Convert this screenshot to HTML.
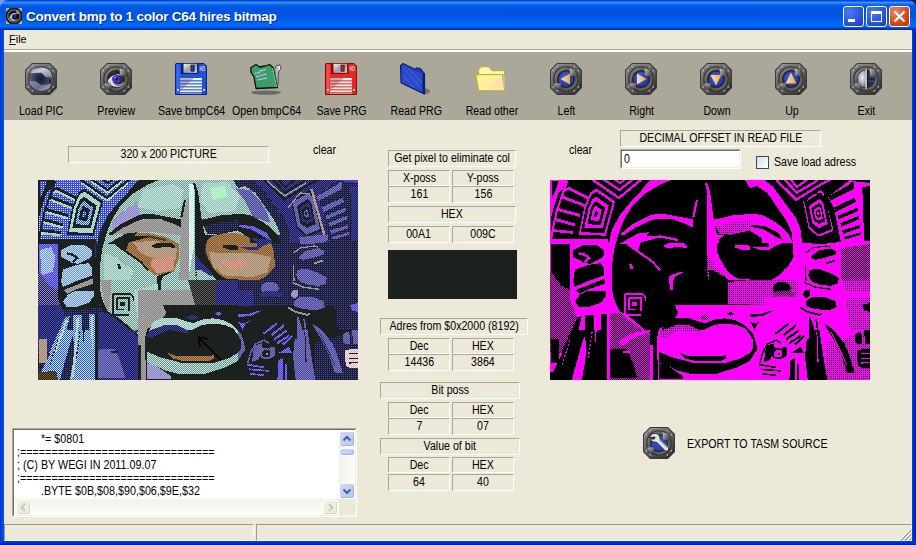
<!DOCTYPE html>
<html>
<head>
<meta charset="utf-8">
<title>Convert bmp to 1 color C64 hires bitmap</title>
<style>
html,body{margin:0;padding:0;}
body{width:916px;height:545px;overflow:hidden;background:#ECE9D8;font-family:"Liberation Sans",sans-serif;font-size:11px;color:#000;position:relative;}
.abs{position:absolute;}
#titlebar{left:0;top:0;width:916px;height:30px;background:linear-gradient(to bottom,#0037D0 0px,#0550E8 1px,#3D95FF 2.5px,#1070F8 4px,#0058E8 6px,#0054E0 9px,#0056E4 17px,#0062F4 22px,#0068FF 26px,#0058E8 27.5px,#0030C0 29px,#0028B0 30px);border-radius:8px 8px 0 0;}
#corner-l{top:0;width:8px;height:8px;background:#7A9CEA;}#corner-r{top:0;width:8px;height:8px;background:#0C1A4A;}
#title{left:26px;top:9px;font-weight:bold;font-size:13.5px;line-height:16px;color:#fff;white-space:nowrap;text-shadow:1px 1px 0 #0A2A8C;letter-spacing:-0.25px;}
.sp{box-sizing:border-box;border:1px solid;border-color:#9D9B8C #fff #fff #9D9B8C;}
.cbtn{top:6px;width:21px;height:21px;box-sizing:border-box;border:1px solid #fff;border-radius:3px;background:radial-gradient(circle at 30% 25%,#4C7CF4,#2A52D8 60%,#1C3CB8);}
.cbtn.cls{background:radial-gradient(circle at 30% 25%,#EC8468,#D4481C 60%,#B83208);}
#bl{left:0;top:30px;width:4px;height:515px;background:linear-gradient(to right,#0028B8,#0048E0 1.5px,#0050E8 4px);}
#br{left:912px;top:30px;width:4px;height:515px;background:linear-gradient(to right,#0040E0,#0030C8 2px,#001A98 4px);}
#bb{left:0;top:541px;width:916px;height:4px;background:linear-gradient(to bottom,#0040E0,#0030C8 2px,#001A98 4px);}
#menubar{left:4px;top:30px;width:908px;height:19px;background:#ECE9D8;}
#menu-file{left:9px;top:33px;font-size:11px;}
#tbline1{left:4px;top:49px;width:908px;height:1px;background:#ACA899;}
#tbline2{left:4px;top:50px;width:908px;height:2px;background:#fff;}
#toolbar{left:4px;top:52px;width:908px;height:68px;background:#ACA899;}
.tb{position:absolute;top:52px;width:75px;height:68px;}
.tb .ic{position:absolute;left:21px;top:11px;width:32px;height:32px;}
.tb .lb{position:absolute;left:-10px;width:95px;top:52px;text-align:center;font-size:12.5px;white-space:nowrap;}
.panel{position:absolute;box-sizing:border-box;border:1px solid;border-color:#ACA899 #fff #fff #ACA899;text-align:center;font-size:12.5px;white-space:nowrap;line-height:15px;display:flex;justify-content:center;}
.txt{position:absolute;font-size:12.5px;white-space:nowrap;}
.t{display:inline-block;transform:scaleX(.85);transform-origin:50% 50%;}
.txt .t{transform-origin:0 50%;}
.memo-t{position:absolute;left:4px;top:4px;margin:0;font-family:"Liberation Sans",sans-serif;font-size:12.5px;line-height:13px;transform:scaleX(.86);transform-origin:0 0;}
#vsb{position:absolute;left:326px;top:2px;width:16px;height:68px;background:linear-gradient(to right,#F3F1EC,#FEFEFB);}
#hsb{position:absolute;left:2px;top:70px;width:324px;height:16px;background:linear-gradient(to bottom,#F3F1EC,#FEFEFB);}
.sbtn{position:absolute;left:0;width:16px;height:16px;box-sizing:border-box;border:1px solid #fff;border-radius:3px;background:linear-gradient(135deg,#CBD8FE,#B8C8F6);box-shadow:inset -1px -1px 0 #9BB0EC;}
.sbtn svg{display:block;margin:-1px;}
.sbtn.dis{background:#EFEDE0;border-color:#fff;box-shadow:inset -1px -1px 0 #D8D4C4;}
#sbc{position:absolute;left:326px;top:70px;width:16px;height:16px;background:#ECE9D8;}
</style>
</head>
<body>
<div id="svgdefs"><svg width="0" height="0" style="position:absolute"><defs>
<linearGradient id="gFrame" x1="0" y1="0" x2="0.7" y2="1"><stop offset="0" stop-color="#A4A4A4"/><stop offset="0.3" stop-color="#7C7C7C"/><stop offset="1" stop-color="#303030"/></linearGradient>
<linearGradient id="gFrame2" x1="0" y1="0" x2="0.5" y2="1"><stop offset="0" stop-color="#747474"/><stop offset="1" stop-color="#4C4C4C"/></linearGradient>
<linearGradient id="gRing" x1="0" y1="0" x2="1" y2="1"><stop offset="0" stop-color="#8A8A8A"/><stop offset="0.5" stop-color="#4A4A4A"/><stop offset="1" stop-color="#707070"/></linearGradient>
<linearGradient id="gBladeA" x1="0" y1="0" x2="1" y2="0.6"><stop offset="0" stop-color="#C4C4C4"/><stop offset="1" stop-color="#484848"/></linearGradient>
<linearGradient id="gBladeB" x1="0" y1="0" x2="0.6" y2="1"><stop offset="0" stop-color="#B4B4B4"/><stop offset="1" stop-color="#404040"/></linearGradient>
<radialGradient id="gMetal" cx="0.4" cy="0.15" r="0.95"><stop offset="0" stop-color="#C8CCE0"/><stop offset="0.35" stop-color="#7C809A"/><stop offset="0.7" stop-color="#3C4058"/><stop offset="1" stop-color="#80849C"/></radialGradient>
<radialGradient id="gMetalD" cx="0.5" cy="0.5" r="0.5"><stop offset="0" stop-color="#14172C"/><stop offset="0.6" stop-color="#3C4058"/><stop offset="1" stop-color="#62667E"/></radialGradient>
<linearGradient id="gMetalU" x1="0" y1="0" x2="1" y2="1"><stop offset="0" stop-color="#8E92AA"/><stop offset="0.4" stop-color="#C6CADC"/><stop offset="1" stop-color="#7A7E98"/></linearGradient>
<linearGradient id="gMetalL" x1="0" y1="0" x2="1" y2="0.6"><stop offset="0" stop-color="#9094AC"/><stop offset="0.6" stop-color="#6A6E88"/><stop offset="1" stop-color="#A0A4BA"/></linearGradient>
<radialGradient id="gBlue" cx="0.4" cy="0.35" r="0.8"><stop offset="0" stop-color="#3A5AE8"/><stop offset="1" stop-color="#1830B0"/></radialGradient>
<linearGradient id="gOr" x1="0" y1="0" x2="1" y2="0"><stop offset="0" stop-color="#FFE0A0"/><stop offset="1" stop-color="#F0A840"/></linearGradient>
<radialGradient id="gSph" cx="0.55" cy="0.4" r="0.75"><stop offset="0" stop-color="#F0F0FA"/><stop offset="0.6" stop-color="#9C9CB0"/><stop offset="1" stop-color="#4A4A5E"/></radialGradient>
<linearGradient id="gShut" x1="0" y1="0" x2="1" y2="1"><stop offset="0" stop-color="#F4F4F4"/><stop offset="0.5" stop-color="#A0A0A0"/><stop offset="1" stop-color="#D8D8D8"/></linearGradient>
</defs></svg></div><!--/svgdefs-->
<div class="abs" id="corner-l" style="left:0"></div>
<div class="abs" id="corner-r" style="left:908px"></div>
<div class="abs" id="titlebar"></div>
<div class="abs" id="ticon" style="left:6px;top:8px;width:16px;height:16px;"><svg width="16" height="16" viewBox="0 0 32 32" style="display:block"><rect width="32" height="32" fill="#B8B09C"/><polygon points="8,0 24,0 32,8 32,24 24,32 8,32 0,24 0,8" fill="#1E1E1E"/><circle cx="16" cy="16" r="12.5" fill="none" stroke="#6A6A6A" stroke-width="2.4"/><circle cx="16" cy="16" r="8.6" fill="#0E0E0E"/><path d="M7,19 Q8.5,12.5 14,10.4 Q18.5,9.4 21,10.6 L21,12.6 Q15,11.6 12,15.4 Q11,19.4 14.4,22.4 Q18.5,24.6 23.4,21.4 Q22,25.6 16.6,26 Q10,25.4 7,19 Z" fill="#C8C8CC"/><circle cx="16.8" cy="16.2" r="4" fill="#2A36D0"/><circle cx="17" cy="16.4" r="1.8" fill="#0C1060"/><polygon points="20,4 20.5,11.6 27.6,12.6 28,10 24.6,5" fill="#8A8A8A"/><polygon points="4,20.4 11.4,20 12,28 7.6,26 4.6,23" fill="#7A7A7A"/></svg></div><!--/ticon-->
<div class="abs" id="title">Convert bmp to 1 color C64 hires bitmap</div>
<div class="abs cbtn" style="left:843px"><div style="position:absolute;left:4px;top:12px;width:7px;height:3px;background:#fff"></div></div>
<div class="abs cbtn" style="left:866px"><div style="position:absolute;left:4px;top:4px;width:11px;height:11px;box-sizing:border-box;border:1px solid #fff;border-top-width:3px"></div></div>
<div class="abs cbtn cls" style="left:889px"><svg width="19" height="19" viewBox="0 0 19 19" style="display:block"><path d="M4.5,4.5 L14.5,14.5 M14.5,4.5 L4.5,14.5" stroke="#fff" stroke-width="2.2"/></svg></div>
<div class="abs" id="bl"></div><div class="abs" id="br"></div><div class="abs" id="bb"></div>
<div class="abs" id="menubar"></div>
<div class="abs" id="menu-file"><u>F</u>ile</div>
<div class="abs" id="tbline1"></div><div class="abs" id="tbline2"></div>
<div class="abs" id="toolbar"></div>

<div class="tb" style="left:4px"><div class="ic" id="ic0"><svg width="32" height="32" viewBox="0 0 32 32" style="display:block"><polygon points="7,0 25,0 32,7 32,25 25,32 7,32 0,25 0,7" fill="#3A3A3A"/><polygon points="7.4,1 24.6,1 31,7.4 31,24.6 24.6,31 7.4,31 1,24.6 1,7.4" fill="url(#gFrame)"/><polygon points="8.2,2.6 23.8,2.6 29.4,8.2 29.4,23.8 23.8,29.4 8.2,29.4 2.6,23.8 2.6,8.2" fill="url(#gFrame2)"/><circle cx="7.3" cy="3.8" r="0.8" fill="#BDBDBD"/><circle cx="24.4" cy="3.8" r="0.8" fill="#BDBDBD"/><circle cx="3.4" cy="7.8" r="0.8" fill="#BDBDBD"/><circle cx="28.3" cy="7.8" r="0.8" fill="#BDBDBD"/><circle cx="3.4" cy="23.9" r="0.8" fill="#BDBDBD"/><circle cx="28.3" cy="23.9" r="0.8" fill="#BDBDBD"/><circle cx="7.3" cy="27.9" r="0.8" fill="#BDBDBD"/><circle cx="24.4" cy="27.9" r="0.8" fill="#BDBDBD"/><circle cx="4.6" cy="16.5" r="0.8" fill="#BDBDBD"/><circle cx="26.9" cy="16.5" r="0.8" fill="#BDBDBD"/><circle cx="16" cy="16" r="12.6" fill="#262626"/><circle cx="16" cy="16" r="11.8" fill="url(#gMetalD)"/><path d="M4.9,10.5 L7.7,6.3 Q12,4.6 16.7,4.6 Q22,5 25.1,7.7 L27.5,13.6 L20.9,14.3 L16.7,9.8 L5.6,10.1 Z" fill="url(#gMetalU)"/><path d="M4.2,18.1 L10.5,18.5 L16,22 L23.7,21.6 L26.5,17.4 L27.4,18.1 L24.4,25.1 Q21,27.8 16.7,27.9 Q12.5,27.8 9.8,26.5 L4.9,21.6 Z" fill="url(#gMetalL)"/><rect x="24" y="16.2" width="2.4" height="4.6" fill="#23263A"/></svg></div><div class="lb"><span class="t">Load PIC</span></div></div>
<div class="tb" style="left:79px"><div class="ic" id="ic1"><svg width="32" height="32" viewBox="0 0 32 32" style="display:block"><polygon points="7,0 25,0 32,7 32,25 25,32 7,32 0,25 0,7" fill="#3A3A3A"/><polygon points="7.4,1 24.6,1 31,7.4 31,24.6 24.6,31 7.4,31 1,24.6 1,7.4" fill="url(#gFrame)"/><polygon points="8.2,2.6 23.8,2.6 29.4,8.2 29.4,23.8 23.8,29.4 8.2,29.4 2.6,23.8 2.6,8.2" fill="url(#gFrame2)"/><circle cx="7.3" cy="3.8" r="0.8" fill="#BDBDBD"/><circle cx="24.4" cy="3.8" r="0.8" fill="#BDBDBD"/><circle cx="3.4" cy="7.8" r="0.8" fill="#BDBDBD"/><circle cx="28.3" cy="7.8" r="0.8" fill="#BDBDBD"/><circle cx="3.4" cy="23.9" r="0.8" fill="#BDBDBD"/><circle cx="28.3" cy="23.9" r="0.8" fill="#BDBDBD"/><circle cx="7.3" cy="27.9" r="0.8" fill="#BDBDBD"/><circle cx="24.4" cy="27.9" r="0.8" fill="#BDBDBD"/><circle cx="4.6" cy="16.5" r="0.8" fill="#BDBDBD"/><circle cx="26.9" cy="16.5" r="0.8" fill="#BDBDBD"/><circle cx="16" cy="16" r="12.6" fill="#262626"/><circle cx="16" cy="16" r="10.4" fill="none" stroke="url(#gRing)" stroke-width="2.6"/><circle cx="16" cy="16" r="8.2" fill="#2E2E2E"/><path d="M7.8,18.3 Q9,13.6 13.4,11.6 Q16.5,10.4 19.4,11 L19.6,12.4 Q15,12 12.4,14.6 Q11.6,17.6 13.6,20 Q16.5,22.3 20.4,21.4 Q22.6,20.6 23.6,18.8 Q23.4,22.6 19.4,23.8 Q14.4,24.6 11,22.2 Q8.8,20.6 7.8,18.3 Z" fill="#DCDCE0"/><path d="M8.2,15.6 Q11.5,10.8 19.2,10.4" stroke="#1A1A1A" stroke-width="1.2" fill="none"/><path d="M13.6,20 Q16.5,22.3 20.4,21.4 Q22.6,20.6 23.6,18.8 Q23.4,22.6 19.4,23.8 Q15.4,24 13.6,20 Z" fill="#8A8A90"/><circle cx="16.4" cy="15.9" r="3.9" fill="#3434DC"/><circle cx="16.6" cy="16" r="1.6" fill="#141470"/><circle cx="15.2" cy="14.6" r="1.1" fill="#8C94FF"/><polygon points="19.6,5.2 20,12.4 26.6,13.2 27.4,11.4 24.2,6.4" fill="url(#gBladeA)"/><polygon points="4.2,20.6 10.8,20.2 11.4,27 7.8,25.6 4.8,22.6" fill="url(#gBladeB)"/></svg></div><div class="lb"><span class="t">Preview</span></div></div>
<div class="tb" style="left:154px"><div class="ic" id="ic2"><svg width="32" height="32" viewBox="0 0 32 32" style="display:block"><path d="M1,0.5 L29,0.5 L31.5,3 L31.5,31.5 L0.5,31.5 L0.5,1 Z" fill="#2050D8" stroke="#0A1E8C" stroke-width="1"/><rect x="1.5" y="1.5" width="3" height="29" fill="#5080FF" opacity="0.55"/><rect x="6" y="0.5" width="17.5" height="10.5" fill="#0A1E8C"/><rect x="8.5" y="0.8" width="13.5" height="9" fill="url(#gShut)"/><rect x="16" y="2.2" width="3.2" height="6" fill="#1838C0" stroke="#222" stroke-width="0.8"/><text x="24.4" y="7.6" font-family="Liberation Sans, sans-serif" font-size="6.5" font-weight="bold" fill="#D8D0B0" textLength="5.6" lengthAdjust="spacingAndGlyphs">HD</text><rect x="5" y="15" width="22" height="15.5" fill="#B8B4A8"/><path d="M5,30.5 L5,28 L19,15 L27,15 L27,30.5 Z" fill="#F4F4F4"/><rect x="5" y="17.3" width="22" height="1.1" fill="#2050D8"/><rect x="5" y="20.3" width="22" height="1.1" fill="#2050D8"/><rect x="5" y="23.3" width="22" height="1.1" fill="#2050D8"/><rect x="5" y="26.3" width="22" height="1.1" fill="#2050D8"/><rect x="5" y="29.2" width="22" height="1.1" fill="#2050D8"/><rect x="2" y="26" width="2" height="2" fill="#D8D0B0"/><rect x="28" y="26" width="2" height="2" fill="#D8D0B0"/></svg></div><div class="lb"><span class="t">Save bmpC64</span></div></div>
<div class="tb" style="left:229px"><div class="ic" id="ic3"><svg width="32" height="32" viewBox="0 0 32 32" style="display:block"><ellipse cx="16" cy="29.6" rx="15" ry="2.2" fill="#6A6A66"/><path d="M1,4.5 L6,1.5 L9.5,4 L15,3 L19.5,1.5 L23,4.5 L27.5,24.5 L6,25.5 L4,14 L0.8,9 Z" fill="#3C9C6A" stroke="#0A0A0A" stroke-width="1.3" stroke-linejoin="round"/><path d="M22.5,5 L26.8,24" stroke="#50F0A0" stroke-width="1.1" fill="none"/><path d="M24.5,6.5 L26.5,2.5 L30,2 L31,5.5 L28.5,9 L28,22 L27,22 Z" fill="#B8B8B8" stroke="#333" stroke-width="0.8"/><path d="M27.5,4 L29.5,3.5 L29,7" stroke="#F8F8F8" stroke-width="1" fill="none"/><path d="M4.5,10.5 L10,9.5 M9,8.2 L16,6.5 M6,13.8 L10,13 M10.5,12.5 L17,11 M7.5,17 L17,15" stroke="#C8C8F0" stroke-width="1.1" fill="none"/></svg></div><div class="lb"><span class="t">Open bmpC64</span></div></div>
<div class="tb" style="left:304px"><div class="ic" id="ic4"><svg width="32" height="32" viewBox="0 0 32 32" style="display:block"><path d="M1,0.5 L29,0.5 L31.5,3 L31.5,31.5 L0.5,31.5 L0.5,1 Z" fill="#E82828" stroke="#8C0A0A" stroke-width="1"/><rect x="1.5" y="1.5" width="3" height="29" fill="#FF7070" opacity="0.55"/><rect x="6" y="0.5" width="17.5" height="10.5" fill="#8C0A0A"/><rect x="8.5" y="0.8" width="13.5" height="9" fill="url(#gShut)"/><rect x="16" y="2.2" width="3.2" height="6" fill="#D01818" stroke="#222" stroke-width="0.8"/><text x="24.4" y="7.6" font-family="Liberation Sans, sans-serif" font-size="6.5" font-weight="bold" fill="#D8D0B0" textLength="5.6" lengthAdjust="spacingAndGlyphs">HD</text><rect x="5" y="15" width="22" height="15.5" fill="#B8B4A8"/><path d="M5,30.5 L5,28 L19,15 L27,15 L27,30.5 Z" fill="#F4F4F4"/><rect x="5" y="17.3" width="22" height="1.1" fill="#E82828"/><rect x="5" y="20.3" width="22" height="1.1" fill="#E82828"/><rect x="5" y="23.3" width="22" height="1.1" fill="#E82828"/><rect x="5" y="26.3" width="22" height="1.1" fill="#E82828"/><rect x="5" y="29.2" width="22" height="1.1" fill="#E82828"/><rect x="2" y="26" width="2" height="2" fill="#D8D0B0"/><rect x="28" y="26" width="2" height="2" fill="#D8D0B0"/></svg></div><div class="lb"><span class="t">Save PRG</span></div></div>
<div class="tb" style="left:379px"><div class="ic" id="ic5"><svg width="32" height="32" viewBox="0 0 32 32" style="display:block"><polygon points="25,25 31,27.5 28,31 24,31" fill="#77756C"/><polygon points="0.5,2.2 3,0.4 15,6.2 16.6,4.8 20.6,5.6 24.6,10.6 24.6,31.2 1,20" fill="#1C38B8" stroke="#081858" stroke-width="1" stroke-linejoin="round"/><polygon points="1.5,3 3.2,1.6 15,7.4 23.5,11.5 23.5,29.6 2,19.5" fill="#2A48CC"/><polygon points="22.6,11 24.6,10.6 24.6,31.2 22.6,30" fill="#0A1C70"/><path d="M4,6 L20,24 M3,12 L14,25 M9,6 L22,20" stroke="#4868E0" stroke-width="1.2" opacity="0.6" fill="none"/></svg></div><div class="lb"><span class="t">Read PRG</span></div></div>
<div class="tb" style="left:454px"><div class="ic" id="ic6"><svg width="32" height="32" viewBox="0 0 32 32" style="display:block"><g transform="translate(0,2.2)"><path d="M3.5,9.5 L3.5,4.5 L6.5,1.5 L13.5,1.5 L17,5.5 L29.5,5.5 L29.5,9.5 Z" fill="#FFF4B0" stroke="#B8B020" stroke-width="1"/><path d="M0.8,9.5 L27.5,9.5 L27.5,14 L30,25.5 L3.5,25.5 Z" fill="#FFF0A0" stroke="#B8B020" stroke-width="1" stroke-linejoin="round"/><path d="M27.8,9.5 L29.6,9.5 L29.8,24 L27.6,14 Z" fill="#C8C8B0"/><path d="M14,25 L29.5,25 L27.3,14 L20,12 Z" fill="#FFD8A8" opacity="0.55"/></g></svg></div><div class="lb"><span class="t">Read other</span></div></div>
<div class="tb" style="left:529px"><div class="ic" id="ic7"><svg width="32" height="32" viewBox="0 0 32 32" style="display:block"><polygon points="7,0 25,0 32,7 32,25 25,32 7,32 0,25 0,7" fill="#3A3A3A"/><polygon points="7.4,1 24.6,1 31,7.4 31,24.6 24.6,31 7.4,31 1,24.6 1,7.4" fill="url(#gFrame)"/><polygon points="8.2,2.6 23.8,2.6 29.4,8.2 29.4,23.8 23.8,29.4 8.2,29.4 2.6,23.8 2.6,8.2" fill="url(#gFrame2)"/><circle cx="7.3" cy="3.8" r="0.8" fill="#BDBDBD"/><circle cx="24.4" cy="3.8" r="0.8" fill="#BDBDBD"/><circle cx="3.4" cy="7.8" r="0.8" fill="#BDBDBD"/><circle cx="28.3" cy="7.8" r="0.8" fill="#BDBDBD"/><circle cx="3.4" cy="23.9" r="0.8" fill="#BDBDBD"/><circle cx="28.3" cy="23.9" r="0.8" fill="#BDBDBD"/><circle cx="7.3" cy="27.9" r="0.8" fill="#BDBDBD"/><circle cx="24.4" cy="27.9" r="0.8" fill="#BDBDBD"/><circle cx="4.6" cy="16.5" r="0.8" fill="#BDBDBD"/><circle cx="26.9" cy="16.5" r="0.8" fill="#BDBDBD"/><circle cx="16" cy="16" r="12.6" fill="#262626"/><circle cx="16" cy="16" r="10.4" fill="none" stroke="url(#gRing)" stroke-width="2.6"/><circle cx="16" cy="16" r="8.2" fill="#2E2E2E"/><circle cx="16" cy="16" r="7.2" fill="url(#gBlue)"/><polygon points="10.5,16 20,10.5 20,21.5" fill="url(#gOr)"/><polygon points="19.6,5.2 20,12.4 26.6,13.2 27.4,11.4 24.2,6.4" fill="url(#gBladeA)"/><polygon points="4.2,20.6 10.8,20.2 11.4,27 7.8,25.6 4.8,22.6" fill="url(#gBladeB)"/></svg></div><div class="lb"><span class="t">Left</span></div></div>
<div class="tb" style="left:604px"><div class="ic" id="ic8"><svg width="32" height="32" viewBox="0 0 32 32" style="display:block"><polygon points="7,0 25,0 32,7 32,25 25,32 7,32 0,25 0,7" fill="#3A3A3A"/><polygon points="7.4,1 24.6,1 31,7.4 31,24.6 24.6,31 7.4,31 1,24.6 1,7.4" fill="url(#gFrame)"/><polygon points="8.2,2.6 23.8,2.6 29.4,8.2 29.4,23.8 23.8,29.4 8.2,29.4 2.6,23.8 2.6,8.2" fill="url(#gFrame2)"/><circle cx="7.3" cy="3.8" r="0.8" fill="#BDBDBD"/><circle cx="24.4" cy="3.8" r="0.8" fill="#BDBDBD"/><circle cx="3.4" cy="7.8" r="0.8" fill="#BDBDBD"/><circle cx="28.3" cy="7.8" r="0.8" fill="#BDBDBD"/><circle cx="3.4" cy="23.9" r="0.8" fill="#BDBDBD"/><circle cx="28.3" cy="23.9" r="0.8" fill="#BDBDBD"/><circle cx="7.3" cy="27.9" r="0.8" fill="#BDBDBD"/><circle cx="24.4" cy="27.9" r="0.8" fill="#BDBDBD"/><circle cx="4.6" cy="16.5" r="0.8" fill="#BDBDBD"/><circle cx="26.9" cy="16.5" r="0.8" fill="#BDBDBD"/><circle cx="16" cy="16" r="12.6" fill="#262626"/><circle cx="16" cy="16" r="10.4" fill="none" stroke="url(#gRing)" stroke-width="2.6"/><circle cx="16" cy="16" r="8.2" fill="#2E2E2E"/><circle cx="16" cy="16" r="7.2" fill="url(#gBlue)"/><polygon points="21.5,16 12,10.5 12,21.5" fill="url(#gOr)"/><polygon points="19.6,5.2 20,12.4 26.6,13.2 27.4,11.4 24.2,6.4" fill="url(#gBladeA)"/><polygon points="4.2,20.6 10.8,20.2 11.4,27 7.8,25.6 4.8,22.6" fill="url(#gBladeB)"/></svg></div><div class="lb"><span class="t">Right</span></div></div>
<div class="tb" style="left:679px"><div class="ic" id="ic9"><svg width="32" height="32" viewBox="0 0 32 32" style="display:block"><polygon points="7,0 25,0 32,7 32,25 25,32 7,32 0,25 0,7" fill="#3A3A3A"/><polygon points="7.4,1 24.6,1 31,7.4 31,24.6 24.6,31 7.4,31 1,24.6 1,7.4" fill="url(#gFrame)"/><polygon points="8.2,2.6 23.8,2.6 29.4,8.2 29.4,23.8 23.8,29.4 8.2,29.4 2.6,23.8 2.6,8.2" fill="url(#gFrame2)"/><circle cx="7.3" cy="3.8" r="0.8" fill="#BDBDBD"/><circle cx="24.4" cy="3.8" r="0.8" fill="#BDBDBD"/><circle cx="3.4" cy="7.8" r="0.8" fill="#BDBDBD"/><circle cx="28.3" cy="7.8" r="0.8" fill="#BDBDBD"/><circle cx="3.4" cy="23.9" r="0.8" fill="#BDBDBD"/><circle cx="28.3" cy="23.9" r="0.8" fill="#BDBDBD"/><circle cx="7.3" cy="27.9" r="0.8" fill="#BDBDBD"/><circle cx="24.4" cy="27.9" r="0.8" fill="#BDBDBD"/><circle cx="4.6" cy="16.5" r="0.8" fill="#BDBDBD"/><circle cx="26.9" cy="16.5" r="0.8" fill="#BDBDBD"/><circle cx="16" cy="16" r="12.6" fill="#262626"/><circle cx="16" cy="16" r="10.4" fill="none" stroke="url(#gRing)" stroke-width="2.6"/><circle cx="16" cy="16" r="8.2" fill="#2E2E2E"/><circle cx="16" cy="16" r="7.2" fill="url(#gBlue)"/><polygon points="16,22.5 10.5,12 21.5,12" fill="url(#gOr)"/><polygon points="19.6,5.2 20,12.4 26.6,13.2 27.4,11.4 24.2,6.4" fill="url(#gBladeA)"/><polygon points="4.2,20.6 10.8,20.2 11.4,27 7.8,25.6 4.8,22.6" fill="url(#gBladeB)"/></svg></div><div class="lb"><span class="t">Down</span></div></div>
<div class="tb" style="left:754px"><div class="ic" id="ic10"><svg width="32" height="32" viewBox="0 0 32 32" style="display:block"><polygon points="7,0 25,0 32,7 32,25 25,32 7,32 0,25 0,7" fill="#3A3A3A"/><polygon points="7.4,1 24.6,1 31,7.4 31,24.6 24.6,31 7.4,31 1,24.6 1,7.4" fill="url(#gFrame)"/><polygon points="8.2,2.6 23.8,2.6 29.4,8.2 29.4,23.8 23.8,29.4 8.2,29.4 2.6,23.8 2.6,8.2" fill="url(#gFrame2)"/><circle cx="7.3" cy="3.8" r="0.8" fill="#BDBDBD"/><circle cx="24.4" cy="3.8" r="0.8" fill="#BDBDBD"/><circle cx="3.4" cy="7.8" r="0.8" fill="#BDBDBD"/><circle cx="28.3" cy="7.8" r="0.8" fill="#BDBDBD"/><circle cx="3.4" cy="23.9" r="0.8" fill="#BDBDBD"/><circle cx="28.3" cy="23.9" r="0.8" fill="#BDBDBD"/><circle cx="7.3" cy="27.9" r="0.8" fill="#BDBDBD"/><circle cx="24.4" cy="27.9" r="0.8" fill="#BDBDBD"/><circle cx="4.6" cy="16.5" r="0.8" fill="#BDBDBD"/><circle cx="26.9" cy="16.5" r="0.8" fill="#BDBDBD"/><circle cx="16" cy="16" r="12.6" fill="#262626"/><circle cx="16" cy="16" r="10.4" fill="none" stroke="url(#gRing)" stroke-width="2.6"/><circle cx="16" cy="16" r="8.2" fill="#2E2E2E"/><circle cx="16" cy="16" r="7.2" fill="url(#gBlue)"/><polygon points="16,9.5 10.5,20.5 21.5,20.5" fill="url(#gOr)"/><polygon points="19.6,5.2 20,12.4 26.6,13.2 27.4,11.4 24.2,6.4" fill="url(#gBladeA)"/><polygon points="4.2,20.6 10.8,20.2 11.4,27 7.8,25.6 4.8,22.6" fill="url(#gBladeB)"/></svg></div><div class="lb"><span class="t">Up</span></div></div>
<div class="tb" style="left:829px"><div class="ic" id="ic11"><svg width="32" height="32" viewBox="0 0 32 32" style="display:block"><polygon points="7,0 25,0 32,7 32,25 25,32 7,32 0,25 0,7" fill="#3A3A3A"/><polygon points="7.4,1 24.6,1 31,7.4 31,24.6 24.6,31 7.4,31 1,24.6 1,7.4" fill="url(#gFrame)"/><polygon points="8.2,2.6 23.8,2.6 29.4,8.2 29.4,23.8 23.8,29.4 8.2,29.4 2.6,23.8 2.6,8.2" fill="url(#gFrame2)"/><circle cx="7.3" cy="3.8" r="0.8" fill="#BDBDBD"/><circle cx="24.4" cy="3.8" r="0.8" fill="#BDBDBD"/><circle cx="3.4" cy="7.8" r="0.8" fill="#BDBDBD"/><circle cx="28.3" cy="7.8" r="0.8" fill="#BDBDBD"/><circle cx="3.4" cy="23.9" r="0.8" fill="#BDBDBD"/><circle cx="28.3" cy="23.9" r="0.8" fill="#BDBDBD"/><circle cx="7.3" cy="27.9" r="0.8" fill="#BDBDBD"/><circle cx="24.4" cy="27.9" r="0.8" fill="#BDBDBD"/><circle cx="4.6" cy="16.5" r="0.8" fill="#BDBDBD"/><circle cx="26.9" cy="16.5" r="0.8" fill="#BDBDBD"/><circle cx="16" cy="16" r="12.6" fill="#262626"/><circle cx="16" cy="16" r="10.4" fill="none" stroke="url(#gRing)" stroke-width="2.6"/><circle cx="16" cy="16" r="8.2" fill="#2E2E2E"/><path d="M16,7.5 A8.5,8.5 0 0 0 16,24.5 Z" fill="url(#gSph)"/><rect x="15.6" y="6" width="1.2" height="20" fill="#E8E8F0"/><rect x="17" y="6.5" width="1" height="19" fill="#1A1A1A"/><rect x="18.5" y="13" width="6" height="1.3" fill="#3050E0"/><rect x="18.5" y="17.6" width="6" height="1.3" fill="#3050E0"/><polygon points="19.6,5.2 20,12.4 26.6,13.2 27.4,11.4 24.2,6.4" fill="url(#gBladeA)"/><polygon points="4.2,20.6 10.8,20.2 11.4,27 7.8,25.6 4.8,22.6" fill="url(#gBladeB)"/></svg></div><div class="lb"><span class="t">Exit</span></div></div>

<div class="panel" style="left:68px;top:146px;width:201px;height:17px;"><span class="t">320 x 200 PICTURE</span></div>
<div class="txt" style="left:313px;top:143px;"><span class="t">clear</span></div>
<div class="txt" style="left:569px;top:143px;"><span class="t">clear</span></div>

<div class="abs" id="img1" style="left:38px;top:180px;width:320px;height:200px;background:#3a3f6a;"><svg width="320" height="200" viewBox="0 0 320 200" shape-rendering="crispEdges" style="display:block"><defs><pattern id="Lbd" width="2" height="2" patternUnits="userSpaceOnUse"><rect width="2" height="2" fill="#4440DC"/><rect x="1" width="1" height="1" fill="#1C211F"/><rect y="1" width="1" height="1" fill="#1C211F"/></pattern><pattern id="Lbc" width="2" height="2" patternUnits="userSpaceOnUse"><rect width="2" height="2" fill="#4440DC"/><rect x="1" width="1" height="1" fill="#AAF6E8"/><rect y="1" width="1" height="1" fill="#AAF6E8"/></pattern><pattern id="Lcg" width="2" height="2" patternUnits="userSpaceOnUse"><rect width="2" height="2" fill="#AAF6E8"/><rect x="1" width="1" height="1" fill="#868482"/><rect y="1" width="1" height="1" fill="#868482"/></pattern><pattern id="Lcyl" width="2" height="2" patternUnits="userSpaceOnUse"><rect width="2" height="2" fill="#AAF6E8"/><rect x="1" width="1" height="1" fill="#B0AEAC"/><rect y="1" width="1" height="1" fill="#B0AEAC"/></pattern><pattern id="Lcy" width="2" height="2" patternUnits="userSpaceOnUse"><rect width="2" height="2" fill="#AAF6E8"/><rect x="1" width="1" height="1" fill="#8A80F4"/><rect y="1" width="1" height="1" fill="#8A80F4"/></pattern><pattern id="Lcyw" width="2" height="2" patternUnits="userSpaceOnUse"><rect width="2" height="2" fill="#AAF6E8"/><rect x="1" width="1" height="1" fill="#FFFFFF"/><rect y="1" width="1" height="1" fill="#FFFFFF"/></pattern><pattern id="Llg" width="2" height="2" patternUnits="userSpaceOnUse"><rect width="2" height="2" fill="#B0AEAC"/><rect x="1" width="1" height="1" fill="#868482"/><rect y="1" width="1" height="1" fill="#868482"/></pattern><pattern id="Llgc" width="2" height="2" patternUnits="userSpaceOnUse"><rect width="2" height="2" fill="#B0AEAC"/><rect x="1" width="1" height="1" fill="#AAF6E8"/><rect y="1" width="1" height="1" fill="#AAF6E8"/></pattern><pattern id="Ldgd" width="2" height="2" patternUnits="userSpaceOnUse"><rect width="2" height="2" fill="#5E5C5A"/><rect x="1" width="1" height="1" fill="#1C211F"/><rect y="1" width="1" height="1" fill="#1C211F"/></pattern><pattern id="Ldgb" width="2" height="2" patternUnits="userSpaceOnUse"><rect width="2" height="2" fill="#5E5C5A"/><rect x="1" width="1" height="1" fill="#4440DC"/><rect y="1" width="1" height="1" fill="#4440DC"/></pattern><pattern id="Lgr" width="2" height="2" patternUnits="userSpaceOnUse"><rect width="2" height="2" fill="#868482"/><rect x="1" width="1" height="1" fill="#B0AEAC"/><rect y="1" width="1" height="1" fill="#B0AEAC"/></pattern><pattern id="Llb" width="2" height="2" patternUnits="userSpaceOnUse"><rect width="2" height="2" fill="#8A80F4"/><rect x="1" width="1" height="1" fill="#AAF6E8"/><rect y="1" width="1" height="1" fill="#AAF6E8"/></pattern><pattern id="Llbg" width="2" height="2" patternUnits="userSpaceOnUse"><rect width="2" height="2" fill="#8A80F4"/><rect x="1" width="1" height="1" fill="#B0AEAC"/><rect y="1" width="1" height="1" fill="#B0AEAC"/></pattern><pattern id="Lgb" width="2" height="2" patternUnits="userSpaceOnUse"><rect width="2" height="2" fill="#868482"/><rect x="1" width="1" height="1" fill="#4440DC"/><rect y="1" width="1" height="1" fill="#4440DC"/></pattern><pattern id="Lbl" width="2" height="2" patternUnits="userSpaceOnUse"><rect width="2" height="2" fill="#4440DC"/><rect x="1" width="1" height="1" fill="#8A80F4"/><rect y="1" width="1" height="1" fill="#8A80F4"/></pattern><pattern id="Lglb" width="2" height="2" patternUnits="userSpaceOnUse"><rect width="2" height="2" fill="#B0AEAC"/><rect x="1" width="1" height="1" fill="#8A80F4"/><rect y="1" width="1" height="1" fill="#8A80F4"/></pattern><pattern id="Lbr" width="2" height="2" patternUnits="userSpaceOnUse"><rect width="2" height="2" fill="#80582C"/><rect x="1" width="1" height="1" fill="#B88858"/><rect y="1" width="1" height="1" fill="#B88858"/></pattern><pattern id="Lbrd" width="2" height="2" patternUnits="userSpaceOnUse"><rect width="2" height="2" fill="#80582C"/><rect x="1" width="1" height="1" fill="#1C211F"/><rect y="1" width="1" height="1" fill="#1C211F"/></pattern><pattern id="Lor" width="2" height="2" patternUnits="userSpaceOnUse"><rect width="2" height="2" fill="#B88858"/><rect x="1" width="1" height="1" fill="#B0AEAC"/><rect y="1" width="1" height="1" fill="#B0AEAC"/></pattern><pattern id="Lpk" width="2" height="2" patternUnits="userSpaceOnUse"><rect width="2" height="2" fill="#E8A0A8"/><rect x="1" width="1" height="1" fill="#B88858"/><rect y="1" width="1" height="1" fill="#B88858"/></pattern><pattern id="Lpkw" width="2" height="2" patternUnits="userSpaceOnUse"><rect width="2" height="2" fill="#E8A0A8"/><rect x="1" width="1" height="1" fill="#FFFFFF"/><rect y="1" width="1" height="1" fill="#FFFFFF"/></pattern><pattern id="Llbd" width="2" height="2" patternUnits="userSpaceOnUse"><rect width="2" height="2" fill="#8A80F4"/><rect x="1" width="1" height="1" fill="#1C211F"/><rect y="1" width="1" height="1" fill="#1C211F"/></pattern><pattern id="Lgbd" width="2" height="2" patternUnits="userSpaceOnUse"><rect width="2" height="2" fill="#868482"/><rect x="1" width="1" height="1" fill="#1C211F"/><rect y="1" width="1" height="1" fill="#1C211F"/></pattern><pattern id="Lgbl" width="2" height="2" patternUnits="userSpaceOnUse"><rect width="2" height="2" fill="#868482"/><rect x="1" width="1" height="1" fill="#4440DC"/><rect y="1" width="1" height="1" fill="#4440DC"/></pattern><pattern id="Lcgr" width="2" height="2" patternUnits="userSpaceOnUse"><rect width="2" height="2" fill="#AAF6E8"/><rect x="1" width="1" height="1" fill="#868482"/><rect y="1" width="1" height="1" fill="#868482"/></pattern><pattern id="Lbcq" width="2" height="2" patternUnits="userSpaceOnUse"><rect width="2" height="2" fill="#4440DC"/><rect x="1" width="1" height="1" fill="#AAF6E8"/></pattern><pattern id="Lbdq" width="2" height="2" patternUnits="userSpaceOnUse"><rect width="2" height="2" fill="#1C211F"/><rect x="1" width="1" height="1" fill="#4440DC"/></pattern><pattern id="Lgd" width="2" height="2" patternUnits="userSpaceOnUse"><rect width="2" height="2" fill="#868482"/><rect x="1" width="1" height="1" fill="#1C211F"/><rect y="1" width="1" height="1" fill="#1C211F"/></pattern><pattern id="Llbb" width="2" height="2" patternUnits="userSpaceOnUse"><rect width="2" height="2" fill="#8A80F4"/><rect x="1" width="1" height="1" fill="#4440DC"/><rect y="1" width="1" height="1" fill="#4440DC"/></pattern><pattern id="Lcgn" width="2" height="2" patternUnits="userSpaceOnUse"><rect width="2" height="2" fill="#AAF6E8"/><rect x="1" width="1" height="1" fill="#B4F0A0"/><rect y="1" width="1" height="1" fill="#B4F0A0"/></pattern><pattern id="Lgbq" width="2" height="2" patternUnits="userSpaceOnUse"><rect width="2" height="2" fill="#4440DC"/><rect x="1" width="1" height="1" fill="#868482"/></pattern><pattern id="Lbdk" width="2" height="2" patternUnits="userSpaceOnUse"><rect width="2" height="2" fill="#4440DC"/><rect x="1" width="1" height="1" fill="#1C211F"/></pattern><pattern id="Lbcd" width="2" height="2" patternUnits="userSpaceOnUse"><rect width="2" height="2" fill="#4440DC"/><rect x="1" width="1" height="1" fill="#1C211F"/><rect y="1" width="1" height="1" fill="#1C211F"/></pattern><pattern id="Lorg" width="2" height="2" patternUnits="userSpaceOnUse"><rect width="2" height="2" fill="#B88858"/><rect x="1" width="1" height="1" fill="#80582C"/><rect y="1" width="1" height="1" fill="#80582C"/></pattern><pattern id="Llgd" width="2" height="2" patternUnits="userSpaceOnUse"><rect width="2" height="2" fill="#B0AEAC"/><rect x="1" width="1" height="1" fill="#1C211F"/></pattern></defs><polygon points="0,0 320,0 320,200 0,200" fill="url(#Lbdq)"/><polygon points="0,0 100,0 91,11 80,23 70,35 62,50 59,63 0,63" fill="url(#Lbcq)"/><polygon points="0,0 17,0 13,8 8,14 3,30 0,42" fill="#1C211F"/><polygon points="1.5,1 9,1 5,12 2,18" fill="url(#Lbcq)"/><polyline points="16,12.7 19.5,11.2 37,20.3" fill="none" stroke="url(#Lcyl)" stroke-width="2.4"/><polyline points="12.5,19.8 34,28.2" fill="none" stroke="url(#Lcyl)" stroke-width="2.4"/><polyline points="8.5,32.2 29.5,38.2" fill="none" stroke="url(#Lcyl)" stroke-width="2.4"/><polyline points="6,42.2 24.5,47.6" fill="none" stroke="url(#Lcyl)" stroke-width="2.4"/><polyline points="3.5,53.2 22.5,55.2" fill="none" stroke="url(#Lcyl)" stroke-width="2.4"/><polyline points="43,2.5 69,20.5 90,2.5" fill="none" stroke="url(#Lcyl)" stroke-width="2"/><polyline points="53,1.5 69.5,12.5 84,1" fill="none" stroke="url(#Lcyl)" stroke-width="2"/><polyline points="0.5,0 0.5,64" fill="none" stroke="#1C211F" stroke-width="1.5"/><polyline points="17,1 13,13 7,30 3.5,46 1,60" fill="none" stroke="#1C211F" stroke-width="2"/><polyline points="15,10 19,8.5 38,18" fill="none" stroke="#1C211F" stroke-width="2.6"/><polyline points="12,17 34.5,25.5" fill="none" stroke="#1C211F" stroke-width="2.8"/><polyline points="8,29.5 30,35.5" fill="none" stroke="#1C211F" stroke-width="2.8"/><polyline points="5.5,39.5 25,45" fill="none" stroke="#1C211F" stroke-width="2.8"/><polyline points="3,50.5 23,52.5" fill="none" stroke="#1C211F" stroke-width="2.6"/><polygon points="46.2,8.3 65,21.4 55.7,55.7 28.7,54.6 34.5,26.4 40.5,12.5" fill="#1C211F"/><polygon points="46.2,11.4 62.7,22.9 54.5,53.1 30.8,52.1 35.9,27.3 41.2,15.1" fill="url(#Lcyl)"/><polygon points="46.1,16.8 58.7,25.6 52.5,48.5 34.4,47.8 38.3,28.9 42.3,19.6" fill="#1C211F"/><polygon points="46.1,21.1 55.5,27.7 50.9,44.9 37.4,44.3 40.2,30.2 43.2,23.2" fill="url(#Lbc)"/><polygon points="46.1,26 51.9,30.1 49,40.7 40.6,40.4 42.4,31.6 44.3,27.3" fill="#1C211F"/><polygon points="46,30.9 48.3,32.5 47.2,36.6 43.9,36.5 44.6,33.1 45.3,31.4" fill="url(#Lbcq)"/><polyline points="40,-2 69,18 93,-2" fill="none" stroke="#1C211F" stroke-width="2.4"/><polyline points="50,-3 69.5,10 86,-3" fill="none" stroke="#1C211F" stroke-width="2.2"/><polyline points="60,-3 70,3 78,-3" fill="none" stroke="#1C211F" stroke-width="2"/><polygon points="121,0 195,0 200,8.1 206.9,5.8 217.3,12.7 226.6,26.6 235.8,39.3 241.6,52 244.9,63.1 244.5,75.8 238.2,86.2 228.9,94.3 218.5,98.4 206.9,100.1 200,99.2 200,124.8 124.9,124.8 128.3,133.1 124.3,138.9 109.2,149.3 106.9,158.6 100,164.3 100,156.2 80.9,140 69,130 66,124 63,115 61.5,105 61.5,90 64,70 68,55 74,39.4 82.6,25.7 95,13.8 100,10.4 110,4.6" fill="url(#Lcg)"/><polygon points="121,0 160,0 150,20 143,37 117,34.5 100,35.3 82.6,44 74,39.4 82.6,25.7 95,13.8 110,4.6" fill="url(#Lcg)"/><polygon points="105,10 135,4 146,10 142,28 118,31 100,27" fill="url(#Lcyl)"/><polygon points="74,42 86,31 99,22 103,35 84,46 74,55" fill="url(#Llbg)"/><polygon points="73.4,55.4 84.4,48 100,41 112,39 123,39.5 135,43.5 143,48 143,55 110,51.5 88,53.5" fill="url(#Llg)"/><polygon points="73.4,62.4 88.1,53.6 110,53.2 128.4,56.9 141.3,64.2 141.3,77 135.8,91.7 117.4,95.4 110,89.9 91.7,73.4" fill="url(#Lorg)"/><polygon points="95.4,62.4 117.4,60.6 139.4,67.9 137.6,78.9 117.4,78.9 102.8,73.4" fill="url(#Lor)"/><polygon points="113.8,78.9 136.7,77 135.8,89.9 119.3,93.6 112.8,86.2" fill="url(#Lpk)"/><polyline points="92,58 110,56.5 128,60" fill="none" stroke="url(#Lbrd)" stroke-width="2.2"/><polyline points="182,57 205,58 225,63" fill="none" stroke="url(#Lbrd)" stroke-width="2.2"/><polygon points="64.2,60.6 77,66.4 108.3,90.3 117.4,95.4 119.3,100 63.3,100" fill="url(#Lcg)"/><polygon points="66,73.4 78.9,77 95.4,91.7 91.7,100 66,100" fill="url(#Llgc)"/><polygon points="62,100 120,100 125,125 128,133 124,139 109,149 100,156 81,140 69,130 63,115" fill="url(#Lcg)"/><polygon points="95.4,111 119.3,103.7 125,124 110.1,123.9 110.1,134.9 99.1,136.7" fill="url(#Llgc)"/><polygon points="62.4,100 73.4,100 73.4,107.3 70.6,134.9 66,124" fill="url(#Lgr)"/><polygon points="143.1,36.7 149.5,18.3 151.4,18.3 150.5,100 141.3,100" fill="url(#Lgr)"/><polygon points="151.4,3.7 156,3.7 156.9,124 150.5,124" fill="url(#Lcyw)"/><polygon points="157,60 200,100 200,124.8 125,124.8 120,100 150,100" fill="url(#Lcg)"/><polygon points="160,0 195,0 200,8.1 206.9,5.8 217.3,12.7 226.6,26.6 235.8,39.3 232.5,43.1 215,35 200,34 183,35.3 171.7,38.2 163,40" fill="url(#Lcgr)"/><polygon points="163.7,3.7 189.4,1.8 202.2,16.5 196.7,31.2 171,33 162.8,22" fill="url(#Lcyl)"/><polygon points="172,8 186,6 190,16 176,20" fill="url(#Lcgn)"/><polygon points="197.6,8.3 212.3,10.1 221.5,20.2 228.8,32.1 232.5,43.1 215,36.7 207.7,22" fill="url(#Lgb)"/><polygon points="167.3,60 175.1,55 244.9,55 244.9,63.1 244.5,75.8 238.2,86.2 228.9,94.3 218.5,98.4 206.9,100.1 200,99.2 187.9,98.5 180.9,94.5 176.3,89.7 169.9,78.7 167.3,72.3" fill="url(#Lbdq)"/><polygon points="168.3,60.6 178.3,53.6 196.7,52.7 211.4,56.9 220.6,60.6 233.4,63.3 236.1,73.4 237.1,86.2 229.7,95.4 220.6,100 182,100 172.8,88.1 168.3,73.4" fill="url(#Lorg)"/><polygon points="171,71.6 182,73.4 215,73.4 233.4,77 229.7,91.7 215,97.2 185.7,95.4 174.7,86.2" fill="url(#Lor)"/><polygon points="183.9,80.7 205.9,78.9 208.6,86.2 196.7,90.8 185.7,88.1" fill="url(#Lpk)"/><polygon points="100,0 91,11 80,23 70,35 64,50 60,63 57,80 56.5,100 57.5,110 60,121.6 64.7,129.7 69,130 66,124 63,115 61.5,105 61.5,90 64,70 68,55 74,39.4 82.6,25.7 95,13.8 100,10.4 110,4.6 121,0" fill="#1C211F"/><polyline points="64.7,129.7 80.9,140 100,156.2 108,160" fill="none" stroke="#1C211F" stroke-width="3"/><polygon points="0,58.5 58,58.5 58,64 0,64" fill="#1C211F"/><polygon points="0,64 20,64 20,110 0,125" fill="url(#Llbb)"/><polygon points="2,70 13,67 17.5,77 14.7,91.7 3.7,95.4" fill="url(#Llb)"/><polyline points="0.7,64 0.7,112" fill="none" stroke="#1C211F" stroke-width="1.5"/><polygon points="0,93 2,93 11.5,106 19.7,110 23,125 0,125" fill="url(#Llbd)"/><polygon points="19.7,64 56.8,64 57.5,110 62,128 24,130 19.7,118" fill="#1C211F"/><polygon points="23.1,70 33.5,64.5 46.2,65 54.3,70 54.3,75.8 49.7,79.3 40.5,83.9 33.5,82.7 28.9,79.9 23.1,77" fill="url(#Lcy)"/><polyline points="28.9,73.5 34.7,74.7 39.3,78.1 34.7,82.7" fill="none" stroke="#1C211F" stroke-width="2.3"/><polygon points="24.9,89.7 34.7,86.2 43.9,83.9 50.9,83.3 54.3,88.5 54.3,95.5 38.2,101.2 24.9,107 23.1,101.2" fill="url(#Lcy)"/><polygon points="26,109.9 54.9,98.4 55.3,103.6 38.2,109.3 28.9,114" fill="url(#Lgr)"/><polygon points="24.9,121.6 30.1,114.6 38.2,110.5 55.5,110.5 55.5,116.9 50.9,122.7 38.2,127.3 28.9,127.3" fill="url(#Lcy)"/><polygon points="70.6,54.1 82.6,44 100,35.3 105.8,34.1 117.3,34.5 128.9,36.8 142.8,39.3 142.8,47.6 134.7,43.4 123.1,39.3 111.6,38.7 104.6,39.3 100,40.7 84.4,48 73.4,55.4" fill="#1C211F"/><polygon points="68.8,64.2 88.1,53.6 99.1,52.3 96.3,56 110.1,57.2 90.8,62.4 88.1,70.6 78.9,64.6" fill="#1C211F"/><polyline points="78,64.5 102.3,81.6 110.4,90.3" fill="none" stroke="#1C211F" stroke-width="2"/><polygon points="113.3,66 118.5,63.1 133.5,63.1 137,66 137,67.7 125.4,67.1 117.3,68.3" fill="#1C211F"/><polygon points="79.3,83.5 82.2,83.5 82.9,89 80.4,89" fill="#1C211F"/><polygon points="119.1,96 132.4,91.4 132.9,92.6 124.9,96.6 123.1,101.2 122.5,111.6 120.8,111.6 119.1,101.2" fill="#1C211F"/><polyline points="146.8,20.2 143.4,37" fill="none" stroke="#1C211F" stroke-width="2"/><polyline points="100,57.2 108.7,56.7" fill="none" stroke="#1C211F" stroke-width="1.3"/><polyline points="75.1,114 92.5,114 95.5,117.5 95.5,121" fill="none" stroke="#1C211F" stroke-width="1.6"/><polyline points="75.1,114 75.1,135 91,135" fill="none" stroke="#1C211F" stroke-width="1.6"/><polyline points="79,118 91,118 91,130.5" fill="none" stroke="#1C211F" stroke-width="1.6"/><polyline points="79,118 79,129.5 86,129.5" fill="none" stroke="#1C211F" stroke-width="1.6"/><polygon points="82,121.5 87,121.5 87,125.5 82,125.5" fill="#1C211F"/><polygon points="154.9,2.9 157.2,2.9 160.1,11.6 163,34.7 164.7,46.2 169.4,63 157.2,63 157.2,11.6" fill="#1C211F"/><polygon points="157.2,55 175.1,55 167.1,60.2 167.3,72.3 169.9,78.7 176.3,89.7 180.9,94.5 187.9,98.5 200,99.2 200,104.7 180.9,103.6 178.6,100.7 172.8,93.2 164.7,83.9 160.1,78.1 157.2,74.1" fill="#1C211F"/><polygon points="157.2,74.1 164.7,83.9 174,93.2 174,96.6 162.4,89.7 157.2,89.7" fill="url(#Lbd)"/><polyline points="157.8,89.7 158.5,106" fill="none" stroke="#1C211F" stroke-width="1.2" stroke-dasharray="1.2 1.2"/><polygon points="163,39.9 171.7,38.2 183.2,35.3 200,34.1 211.6,34.7 226.6,42.8 238.2,53.2 242.8,63 211.6,63 211.6,57.8 200,50.9 200,40 183,42 172,45 164.7,46.5" fill="#1C211F"/><polygon points="165.9,46.2 183,42 200,40 200,49.7 178.6,54.3 169.4,54.3" fill="url(#Lbdq)"/><polyline points="178.6,54.3 200,49.7" fill="none" stroke="#1C211F" stroke-width="1.3"/><polygon points="201.2,44.5 215,46.2 228.9,53.2 233,60.1 227.7,57.8 213.9,49.7 201.2,46.8" fill="url(#Lbl)"/><polygon points="200,66.6 208.7,69.5 219.1,69.8 224.9,66 233.5,62.5 233.5,59.6 211.6,57.9 218.5,61.9 219.1,66.6 209.2,67.1" fill="url(#Lbd)"/><polygon points="185,65.4 197.1,64.8 200,66.6 200,70 192.5,70 185.5,67.7" fill="#1C211F"/><polygon points="176.3,104.7 200,100 248,100 248,118 200,118 200,124.8 176.3,110" fill="url(#Lbdq)"/><polygon points="240.8,108 239.9,110.8 237.4,113.1 233.8,114.3 229.8,114.3 226.2,113.1 223.7,110.8 222.8,108 223.7,105.2 226.2,102.9 229.8,101.7 233.8,101.7 237.4,102.9 239.9,105.2" fill="url(#Lgb)"/><polygon points="213.9,0 300,0 278,17 284,28 291,62 252,63 250.9,50.9 246.2,38.2 234.7,23.1 223.1,6.9" fill="url(#Lbd)"/><polygon points="195,0 213.9,0 223.1,6.9 234.7,23.1 246.2,38.2 250.9,50.9 252,63 254,100 245,100 242.8,63 241.6,52 235.8,39.3 226.6,26.6 217.3,12.7 206.9,5.8 200,8.1" fill="url(#Lbdq)"/><polyline points="226.5,0 246.2,19.7 270,5 281,-1" fill="none" stroke="#1C211F" stroke-width="2.3"/><polyline points="234,-1 246.8,12.7 265,2 268,-1" fill="none" stroke="#1C211F" stroke-width="2.3"/><polyline points="240,-1 247,7 258,-1" fill="none" stroke="#1C211F" stroke-width="2"/><polygon points="253.2,21.4 270.5,10.1 276.1,15.6 283.5,50.8 268.4,56.9 258.4,48" fill="#1C211F"/><polygon points="254.7,22.6 270.3,12.4 275.3,17.4 282,49.1 268.4,54.6 259.4,46.5" fill="url(#Lgbl)"/><polygon points="258.9,26 269.6,19 273.1,22.4 277.7,44.2 268.3,48 262.1,42.5" fill="#1C211F"/><polygon points="261.4,28.1 269.2,23 271.8,25.4 275.1,41.3 268.3,44 263.8,40" fill="url(#Lbd)"/><polygon points="263.7,29.9 268.9,26.5 270.6,28.1 272.8,38.7 268.3,40.5 265.3,37.9" fill="#1C211F"/><polygon points="265.5,31.3 268.6,29.3 269.6,30.3 271,36.6 268.2,37.7 266.4,36.1" fill="url(#Lgbl)"/><polygon points="267.1,32.7 268.4,31.9 268.8,32.2 269.3,34.7 268.2,35.1 267.5,34.5" fill="#1C211F"/><polyline points="229,1 246.5,16 268,3" fill="none" stroke="url(#Llg)" stroke-width="1.6"/><polyline points="250,28 262,13 272,14" fill="none" stroke="url(#Llg)" stroke-width="1.3"/><polyline points="273.5,9 286,54 287,60 266,62.5" fill="none" stroke="url(#Lor)" stroke-width="2.4"/><polygon points="278.3,16.5 299.4,4.6 301.3,1.8 304,1.8 304,9.2 280.2,21.1" fill="url(#Lgbl)"/><polygon points="283.9,27.5 305,17.4 305.9,22 285.7,32.1" fill="url(#Lgbl)"/><polygon points="287.5,35.8 307.7,27.5 308.1,31.2 288.4,39.4" fill="url(#Lgbl)"/><polygon points="290.3,43.1 308.6,35.8 309.2,39.4 291.2,46.8" fill="url(#Lgbl)"/><polygon points="292.1,50.5 309.5,45 309.9,48.1 293,54.1" fill="url(#Lgbl)"/><polygon points="293.9,56.9 310.5,52.3 310.5,55 294.9,59.6" fill="url(#Lgbl)"/><polygon points="312.3,7.3 320,5.5 320,60.6 314.1,60.6" fill="url(#Lbd)"/><polygon points="300,0 320,0 320,3 306,1.5" fill="#4440DC"/><polygon points="291.2,68 320,64 320,100 291,100" fill="url(#Lbdq)"/><polygon points="293,100 320,100 320,112 296,112" fill="url(#Lbdq)"/><polygon points="261.3,57.3 280.9,55 290.2,55 290.2,59.6 285.5,63.1 262.4,64.2" fill="url(#Lgbl)"/><polyline points="255.5,73 262.4,68 276.3,66 279.8,67" fill="none" stroke="url(#Lgr)" stroke-width="1.3"/><polygon points="260.1,77 268.2,70.6 280.9,68.3 286.7,71.2 285.5,74.7 274,78.1 264.7,79.9" fill="url(#Lgbl)"/><polygon points="275.1,82.7 284.4,79.9 285,81.6 276.3,84.5" fill="url(#Lgr)"/><polygon points="259,89.7 269.4,89.1 280.9,93.2 289,97.8 287.9,103.6 280.9,105.9 269.4,104.7 261.3,101.2 258.4,95.5" fill="url(#Lgbl)"/><polyline points="254.3,102.4 264.7,107 280.9,109.3" fill="none" stroke="url(#Lgr)" stroke-width="1.4"/><polygon points="260.3,114.5 259.2,117.1 256.6,118.2 254,117.1 252.9,114.5 254,111.9 256.6,110.8 259.2,111.9" fill="url(#Lglb)"/><polyline points="255.5,85 256,101" fill="none" stroke="url(#Lgr)" stroke-width="1.2"/><polygon points="0,125 23,125 27,137 11,173 0,173" fill="url(#Lbd)"/><polygon points="1.2,158.6 8.7,158.6 8.7,182.7 1.2,182.7" fill="url(#Lor)"/><polygon points="27.2,137.2 31.8,136 23.7,173 11,173" fill="url(#Lbc)"/><polygon points="21.8,150 37.1,150 32.8,160.9 21.8,200 2.2,200 2.2,193.7 13.1,171.8" fill="url(#Lbc)"/><polygon points="34.7,134.9 44.5,134.9 43.7,150 56.8,150 56.8,200 31.7,200 36,177.3" fill="url(#Lbc)"/><polygon points="50.9,133.7 56.6,133.7 56.6,173 53.8,173 51.4,156.2" fill="url(#Lbc)"/><polyline points="29,140 17,172" fill="none" stroke="url(#Lcyl)" stroke-width="2.2"/><polyline points="40,138 37,176 34,198" fill="none" stroke="url(#Lcyl)" stroke-width="2.6"/><polyline points="53.8,136 54.6,170" fill="none" stroke="url(#Lcyl)" stroke-width="1.6"/><polyline points="46.5,136 45.5,162" fill="none" stroke="#1C211F" stroke-width="1.3"/><polyline points="42,152 38,180" fill="none" stroke="#1C211F" stroke-width="1.2" stroke-dasharray="2 2"/><polyline points="20,160 12,185" fill="none" stroke="#1C211F" stroke-width="1.2" stroke-dasharray="2 2"/><polygon points="56.8,133 59.5,133 59.5,200 56.8,200" fill="#1C211F"/><polygon points="59.5,133 70,133 100,156.2 108,160 108,200 59.5,200" fill="url(#Lbd)"/><polygon points="59.5,169.7 76.4,168.6 83,182.8 87.3,198 59.5,198" fill="url(#Lgbl)"/><polygon points="69.9,160.9 83,153.3 100,150 100,152.2 83,157.6 71,166.4" fill="url(#Lbd)"/><polyline points="73,172 80,172" fill="none" stroke="#1C211F" stroke-width="1.5"/><polygon points="0,192 18,191 20,200 0,200" fill="url(#Lbrd)"/><polygon points="100,124.8 320,124.8 320,200 100,200" fill="#1C211F"/><polygon points="100,110 176.3,110 200,116.9 200,124.8 124.9,124.8 128.3,133.1 124.3,138.9 109.2,149.3 106.9,158.6 100,164.3" fill="url(#Llg)"/><polygon points="150,100 200,100 200,124.8 157,124.8" fill="url(#Ldgd)"/><polygon points="178,102 200,100 200,124 178,124" fill="url(#Lbd)"/><polygon points="161.3,137.5 154.3,140.5 147.3,137.5 154.3,134.5" fill="url(#Lbd)"/><polygon points="184,133.7 180.5,135.7 177,133.7 180.5,131.7" fill="url(#Lbl)"/><polygon points="115,141.8 125.4,137.7 139.3,138.3 149.7,141.8 155.5,142.9 164.7,139.5 175.1,138.3 185.5,140.1 192.5,143.5 200,150.5 200,155.1 194.8,148.2 185.5,144.7 176.3,144.1 164.7,144.7 155.5,149.3 149.7,150.5 138.2,144.7 127.7,144.7 111.6,150.5 109.2,156.2" fill="url(#Lcyl)"/><polygon points="109.2,156.2 111.6,150.5 127.7,144.7 138.2,144.7 149.7,150.5 149.7,153 130,150 113,158" fill="url(#Lbd)"/><polygon points="100,164.3 106.9,158.6 108.1,200 100,200" fill="url(#Lgr)"/><polygon points="100,165 103.3,165 103.3,200 100,200" fill="#1C211F"/><polygon points="129.5,172.4 137.1,175.7 169.9,176.2 176.4,175.1 176.4,178.4 172.1,180.6 143.7,180.6 134.9,178.4" fill="url(#Lbr)"/><polygon points="108.7,171.3 121.8,177.3 143.7,182.8 176.4,182.8 190.6,178.2 200,172.9 200,180.8 187.3,187.3 167.7,193.7 139.3,193.7 127.3,190.6 117.5,185.5 109.3,182.8" fill="url(#Lcg)"/><polygon points="109.3,183.3 117.5,185.5 132.8,195.9 132.8,198.6 109.3,198.6" fill="url(#Lglb)"/><polygon points="200,150.5 203,154 206,162 207.5,170 204,174 200,180.8 200,172.9 203.5,168 203,160 200,155.1" fill="url(#Lgbl)"/><polygon points="200,110 215,110 215,126 200,126" fill="url(#Lbd)"/><polygon points="245,114 243.9,115.4 240.7,116.5 236.1,117.1 230.9,117.1 226.3,116.5 223.1,115.4 222,114 223.1,112.6 226.3,111.5 230.9,110.9 236.1,110.9 240.7,111.5 243.9,112.6" fill="url(#Lbd)"/><polygon points="260.5,113 259.5,115.5 257,116.5 254.5,115.5 253.5,113 254.5,110.5 257,109.5 259.5,110.5" fill="url(#Lglb)"/><polygon points="255.5,121.6 261.3,117.5 274,116.9 285.5,121 286.7,127.3 279.8,130.2 264.7,129.1 256.6,126.2" fill="url(#Lgbl)"/><polyline points="249.7,127.3 257.8,132 269.4,134.9 271.7,133.7" fill="none" stroke="url(#Lgr)" stroke-width="1.8"/><polygon points="200,134.3 211.6,133.7 222.5,130.2 222.5,131.4 212.7,136 200,137.2" fill="url(#Lbl)"/><polygon points="200,141.8 205.8,143.5 213.9,139.5 206.9,144.7 204.6,149.9 202.3,145.8" fill="url(#Lbl)"/><polyline points="225.4,153.9 238.7,143.5" fill="none" stroke="url(#Lbl)" stroke-width="2.2"/><polyline points="233.5,155.1 246.2,145.3" fill="none" stroke="url(#Lbl)" stroke-width="2.2"/><polyline points="235.8,159.7 248.6,150.5" fill="none" stroke="url(#Lbl)" stroke-width="2.2"/><polyline points="239.3,163.2 250.9,155.7" fill="none" stroke="url(#Lbl)" stroke-width="2.2"/><polyline points="245.1,164.3 254.3,156.2" fill="none" stroke="url(#Lbl)" stroke-width="2.2"/><polyline points="209.8,182.8 213.1,171.6 217.7,163.8 226.2,160.2 230.8,163.1" fill="none" stroke="url(#Lgbl)" stroke-width="1.6"/><polygon points="234.8,173.6 234.1,176.2 232.3,178.3 229.7,179.4 226.7,179.4 224.1,178.3 222.3,176.2 221.6,173.6 222.3,171 224.1,168.9 226.7,167.8 229.7,167.8 232.3,168.9 234.1,171" fill="url(#Lgbl)"/><polygon points="232.6,173.6 232.2,175.2 230.9,176.6 229.2,177.3 227.2,177.3 225.5,176.6 224.2,175.2 223.8,173.6 224.2,172 225.5,170.6 227.2,169.9 229.2,169.9 230.9,170.6 232.2,172" fill="#1C211F"/><polygon points="230.6,174 229.8,175.1 228.2,175.1 227.4,174 228.2,172.9 229.8,172.9" fill="url(#Lgr)"/><polyline points="209.2,184.7 226.2,187.4" fill="none" stroke="url(#Lbl)" stroke-width="1.9"/><polyline points="211.1,189.3 230.8,190.9" fill="none" stroke="url(#Lbl)" stroke-width="1.7"/><polyline points="211.8,193.9 226.2,195.2" fill="none" stroke="url(#Lbl)" stroke-width="1.7"/><polygon points="216,166 224,163 225,170 220,180 214,182" fill="url(#Lgbl)"/><polygon points="231.5,167 236.7,167 236.7,176 233,178" fill="url(#Lgbl)"/><polygon points="277,163 320,150 320,200 277.3,200" fill="url(#Lbdq)"/><polygon points="259,137.2 260.7,137.2 263,144.7 264.5,150 269.5,150 271.4,163.1 273.4,176.2 277.3,200 257.7,200 255,176.2 256.6,159.7 259,158.6" fill="url(#Lgbl)"/><polyline points="267,152 268,182" fill="none" stroke="#1C211F" stroke-width="1.2"/><polygon points="265.3,138.9 267.1,138.9 269.4,156.2 267.5,156.2" fill="url(#Lgbl)"/><polygon points="274,143.5 277.5,145.8 283.9,150 294.4,163.1 299.6,176.2 304.8,193.3 297,193.3 291.7,176.2 283.9,160.5" fill="url(#Lgbl)"/><polyline points="281,152 297,185" fill="none" stroke="url(#Lbd)" stroke-width="1.1"/><polygon points="239.3,200 240.6,180.1 244.6,178.2 245.2,200" fill="url(#Lbl)"/><polygon points="246.5,200 247.2,184.1 249.1,183.4 249.5,200" fill="url(#Lbl)"/><polygon points="240.5,173 250.9,166.6 254.3,173" fill="url(#Lbl)"/><polygon points="304.8,153.9 311.4,151.3 312.1,164.4 304.8,163.1" fill="url(#Lgbl)"/><polygon points="314,150 320,150 320,164.4 315.3,164.4" fill="url(#Lgbl)"/><polygon points="296,118 320,118 320,150 300,150" fill="url(#Lbdq)"/><polygon points="312,125 320,123 320,132 314,130.5" fill="url(#Lbl)"/><polygon points="307.5,169.7 320,169 320,188 308.8,187.4 306.8,178.8" fill="url(#Lpkw)"/><polyline points="311.4,173.5 320,173.3" fill="none" stroke="#1C211F" stroke-width="1.1"/><polyline points="311.4,178.4 320,178.2" fill="none" stroke="#1C211F" stroke-width="1.1"/><polyline points="311.4,183 320,182.8" fill="none" stroke="#1C211F" stroke-width="1.1"/><g shape-rendering="auto"><path d="M160,157 L183,180" stroke="#000" stroke-width="1.6" fill="none"/><path d="M160,157 L170,159 M160,157 L162,167" stroke="#000" stroke-width="1.6" fill="none"/></g></svg></div><!--/img1-->
<div class="abs" id="img2" style="left:550px;top:180px;width:320px;height:200px;background:#a000a0;"><svg width="320" height="200" viewBox="0 0 320 200" shape-rendering="crispEdges" style="display:block"><defs><pattern id="RX" width="2" height="2" patternUnits="userSpaceOnUse"><rect width="2" height="2" fill="#FF00FF"/><rect x="1" width="1" height="1" fill="#000"/></pattern><pattern id="RY" width="2" height="2" patternUnits="userSpaceOnUse"><rect width="2" height="2" fill="#FF00FF"/><rect x="1" width="1" height="1" fill="#000"/><rect y="1" width="1" height="1" fill="#000"/></pattern></defs><polygon points="0,0 320,0 320,200 0,200" fill="#FF00FF"/><polygon points="0,0 100,0 91,11 80,23 70,35 62,50 59,63 0,63" fill="#000"/><polygon points="0,0 17,0 13,8 8,14 3,30 0,42" fill="#FF00FF"/><polygon points="1.5,1 9,1 5,12 2,18" fill="#000"/><polyline points="16,12.7 19.5,11.2 37,20.3" fill="none" stroke="#000" stroke-width="2.4"/><polyline points="12.5,19.8 34,28.2" fill="none" stroke="#000" stroke-width="2.4"/><polyline points="8.5,32.2 29.5,38.2" fill="none" stroke="#000" stroke-width="2.4"/><polyline points="6,42.2 24.5,47.6" fill="none" stroke="#000" stroke-width="2.4"/><polyline points="3.5,53.2 22.5,55.2" fill="none" stroke="#000" stroke-width="2.4"/><polyline points="43,2.5 69,20.5 90,2.5" fill="none" stroke="#000" stroke-width="2"/><polyline points="53,1.5 69.5,12.5 84,1" fill="none" stroke="#000" stroke-width="2"/><polyline points="0.5,0 0.5,64" fill="none" stroke="#FF00FF" stroke-width="1.5"/><polyline points="17,1 13,13 7,30 3.5,46 1,60" fill="none" stroke="#FF00FF" stroke-width="2"/><polyline points="15,10 19,8.5 38,18" fill="none" stroke="#FF00FF" stroke-width="2.6"/><polyline points="12,17 34.5,25.5" fill="none" stroke="#FF00FF" stroke-width="2.8"/><polyline points="8,29.5 30,35.5" fill="none" stroke="#FF00FF" stroke-width="2.8"/><polyline points="5.5,39.5 25,45" fill="none" stroke="#FF00FF" stroke-width="2.8"/><polyline points="3,50.5 23,52.5" fill="none" stroke="#FF00FF" stroke-width="2.6"/><polygon points="46.2,8.3 65,21.4 55.7,55.7 28.7,54.6 34.5,26.4 40.5,12.5" fill="#FF00FF"/><polygon points="46.2,11.4 62.7,22.9 54.5,53.1 30.8,52.1 35.9,27.3 41.2,15.1" fill="#000"/><polygon points="46.1,16.8 58.7,25.6 52.5,48.5 34.4,47.8 38.3,28.9 42.3,19.6" fill="#FF00FF"/><polygon points="46.1,21.1 55.5,27.7 50.9,44.9 37.4,44.3 40.2,30.2 43.2,23.2" fill="#000"/><polygon points="46.1,26 51.9,30.1 49,40.7 40.6,40.4 42.4,31.6 44.3,27.3" fill="#FF00FF"/><polygon points="46,30.9 48.3,32.5 47.2,36.6 43.9,36.5 44.6,33.1 45.3,31.4" fill="#000"/><polyline points="40,-2 69,18 93,-2" fill="none" stroke="#FF00FF" stroke-width="2.4"/><polyline points="50,-3 69.5,10 86,-3" fill="none" stroke="#FF00FF" stroke-width="2.2"/><polyline points="60,-3 70,3 78,-3" fill="none" stroke="#FF00FF" stroke-width="2"/><polygon points="121,0 195,0 200,8.1 206.9,5.8 217.3,12.7 226.6,26.6 235.8,39.3 241.6,52 244.9,63.1 244.5,75.8 238.2,86.2 228.9,94.3 218.5,98.4 206.9,100.1 200,99.2 200,124.8 124.9,124.8 128.3,133.1 124.3,138.9 109.2,149.3 106.9,158.6 100,164.3 100,156.2 80.9,140 69,130 66,124 63,115 61.5,105 61.5,90 64,70 68,55 74,39.4 82.6,25.7 95,13.8 100,10.4 110,4.6" fill="#000"/><polygon points="121,0 160,0 150,20 143,37 117,34.5 100,35.3 82.6,44 74,39.4 82.6,25.7 95,13.8 110,4.6" fill="#000"/><polygon points="105,10 135,4 146,10 142,28 118,31 100,27" fill="#000"/><polygon points="74,42 86,31 99,22 103,35 84,46 74,55" fill="#000"/><polygon points="73.4,55.4 84.4,48 100,41 112,39 123,39.5 135,43.5 143,48 143,55 110,51.5 88,53.5" fill="#000"/><polygon points="73.4,62.4 88.1,53.6 110,53.2 128.4,56.9 141.3,64.2 141.3,77 135.8,91.7 117.4,95.4 110,89.9 91.7,73.4" fill="#000"/><polygon points="95.4,62.4 117.4,60.6 139.4,67.9 137.6,78.9 117.4,78.9 102.8,73.4" fill="#000"/><polygon points="113.8,78.9 136.7,77 135.8,89.9 119.3,93.6 112.8,86.2" fill="#000"/><polyline points="92,58 110,56.5 128,60" fill="none" stroke="#FF00FF" stroke-width="2.2"/><polyline points="182,57 205,58 225,63" fill="none" stroke="#FF00FF" stroke-width="2.2"/><polygon points="64.2,60.6 77,66.4 108.3,90.3 117.4,95.4 119.3,100 63.3,100" fill="#000"/><polygon points="66,73.4 78.9,77 95.4,91.7 91.7,100 66,100" fill="#000"/><polygon points="62,100 120,100 125,125 128,133 124,139 109,149 100,156 81,140 69,130 63,115" fill="#000"/><polygon points="95.4,111 119.3,103.7 125,124 110.1,123.9 110.1,134.9 99.1,136.7" fill="#000"/><polygon points="62.4,100 73.4,100 73.4,107.3 70.6,134.9 66,124" fill="#000"/><polygon points="143.1,36.7 149.5,18.3 151.4,18.3 150.5,100 141.3,100" fill="#000"/><polygon points="151.4,3.7 156,3.7 156.9,124 150.5,124" fill="#000"/><polygon points="157,60 200,100 200,124.8 125,124.8 120,100 150,100" fill="#000"/><polygon points="160,0 195,0 200,8.1 206.9,5.8 217.3,12.7 226.6,26.6 235.8,39.3 232.5,43.1 215,35 200,34 183,35.3 171.7,38.2 163,40" fill="#000"/><polygon points="163.7,3.7 189.4,1.8 202.2,16.5 196.7,31.2 171,33 162.8,22" fill="#000"/><polygon points="172,8 186,6 190,16 176,20" fill="#000"/><polygon points="197.6,8.3 212.3,10.1 221.5,20.2 228.8,32.1 232.5,43.1 215,36.7 207.7,22" fill="#000"/><polygon points="167.3,60 175.1,55 244.9,55 244.9,63.1 244.5,75.8 238.2,86.2 228.9,94.3 218.5,98.4 206.9,100.1 200,99.2 187.9,98.5 180.9,94.5 176.3,89.7 169.9,78.7 167.3,72.3" fill="#000"/><polygon points="168.3,60.6 178.3,53.6 196.7,52.7 211.4,56.9 220.6,60.6 233.4,63.3 236.1,73.4 237.1,86.2 229.7,95.4 220.6,100 182,100 172.8,88.1 168.3,73.4" fill="#000"/><polygon points="171,71.6 182,73.4 215,73.4 233.4,77 229.7,91.7 215,97.2 185.7,95.4 174.7,86.2" fill="#000"/><polygon points="183.9,80.7 205.9,78.9 208.6,86.2 196.7,90.8 185.7,88.1" fill="#000"/><polygon points="100,0 91,11 80,23 70,35 64,50 60,63 57,80 56.5,100 57.5,110 60,121.6 64.7,129.7 69,130 66,124 63,115 61.5,105 61.5,90 64,70 68,55 74,39.4 82.6,25.7 95,13.8 100,10.4 110,4.6 121,0" fill="#FF00FF"/><polyline points="64.7,129.7 80.9,140 100,156.2 108,160" fill="none" stroke="#FF00FF" stroke-width="3"/><polygon points="0,58.5 58,58.5 58,64 0,64" fill="#FF00FF"/><polygon points="0,64 20,64 20,110 0,125" fill="#000"/><polygon points="2,70 13,67 17.5,77 14.7,91.7 3.7,95.4" fill="#000"/><polyline points="0.7,64 0.7,112" fill="none" stroke="#FF00FF" stroke-width="1.5"/><polygon points="0,93 2,93 11.5,106 19.7,110 23,125 0,125" fill="url(#RY)"/><polygon points="19.7,64 56.8,64 57.5,110 62,128 24,130 19.7,118" fill="#FF00FF"/><polygon points="23.1,70 33.5,64.5 46.2,65 54.3,70 54.3,75.8 49.7,79.3 40.5,83.9 33.5,82.7 28.9,79.9 23.1,77" fill="#000"/><polyline points="28.9,73.5 34.7,74.7 39.3,78.1 34.7,82.7" fill="none" stroke="#FF00FF" stroke-width="2.3"/><polygon points="24.9,89.7 34.7,86.2 43.9,83.9 50.9,83.3 54.3,88.5 54.3,95.5 38.2,101.2 24.9,107 23.1,101.2" fill="#000"/><polygon points="26,109.9 54.9,98.4 55.3,103.6 38.2,109.3 28.9,114" fill="#000"/><polygon points="24.9,121.6 30.1,114.6 38.2,110.5 55.5,110.5 55.5,116.9 50.9,122.7 38.2,127.3 28.9,127.3" fill="#000"/><polygon points="70.6,54.1 82.6,44 100,35.3 105.8,34.1 117.3,34.5 128.9,36.8 142.8,39.3 142.8,47.6 134.7,43.4 123.1,39.3 111.6,38.7 104.6,39.3 100,40.7 84.4,48 73.4,55.4" fill="#FF00FF"/><polygon points="68.8,64.2 88.1,53.6 99.1,52.3 96.3,56 110.1,57.2 90.8,62.4 88.1,70.6 78.9,64.6" fill="#FF00FF"/><polyline points="78,64.5 102.3,81.6 110.4,90.3" fill="none" stroke="#FF00FF" stroke-width="2"/><polygon points="113.3,66 118.5,63.1 133.5,63.1 137,66 137,67.7 125.4,67.1 117.3,68.3" fill="#FF00FF"/><polygon points="79.3,83.5 82.2,83.5 82.9,89 80.4,89" fill="#FF00FF"/><polygon points="119.1,96 132.4,91.4 132.9,92.6 124.9,96.6 123.1,101.2 122.5,111.6 120.8,111.6 119.1,101.2" fill="#FF00FF"/><polyline points="146.8,20.2 143.4,37" fill="none" stroke="#FF00FF" stroke-width="2"/><polyline points="100,57.2 108.7,56.7" fill="none" stroke="#FF00FF" stroke-width="1.3"/><polyline points="75.1,114 92.5,114 95.5,117.5 95.5,121" fill="none" stroke="#FF00FF" stroke-width="1.6"/><polyline points="75.1,114 75.1,135 91,135" fill="none" stroke="#FF00FF" stroke-width="1.6"/><polyline points="79,118 91,118 91,130.5" fill="none" stroke="#FF00FF" stroke-width="1.6"/><polyline points="79,118 79,129.5 86,129.5" fill="none" stroke="#FF00FF" stroke-width="1.6"/><polygon points="82,121.5 87,121.5 87,125.5 82,125.5" fill="#FF00FF"/><polygon points="154.9,2.9 157.2,2.9 160.1,11.6 163,34.7 164.7,46.2 169.4,63 157.2,63 157.2,11.6" fill="#FF00FF"/><polygon points="157.2,55 175.1,55 167.1,60.2 167.3,72.3 169.9,78.7 176.3,89.7 180.9,94.5 187.9,98.5 200,99.2 200,104.7 180.9,103.6 178.6,100.7 172.8,93.2 164.7,83.9 160.1,78.1 157.2,74.1" fill="#FF00FF"/><polygon points="157.2,74.1 164.7,83.9 174,93.2 174,96.6 162.4,89.7 157.2,89.7" fill="url(#RX)"/><polyline points="157.8,89.7 158.5,106" fill="none" stroke="#FF00FF" stroke-width="1.2" stroke-dasharray="1.2 1.2"/><polygon points="163,39.9 171.7,38.2 183.2,35.3 200,34.1 211.6,34.7 226.6,42.8 238.2,53.2 242.8,63 211.6,63 211.6,57.8 200,50.9 200,40 183,42 172,45 164.7,46.5" fill="#FF00FF"/><polygon points="165.9,46.2 183,42 200,40 200,49.7 178.6,54.3 169.4,54.3" fill="url(#RX)"/><polyline points="178.6,54.3 200,49.7" fill="none" stroke="#FF00FF" stroke-width="1.3"/><polygon points="201.2,44.5 215,46.2 228.9,53.2 233,60.1 227.7,57.8 213.9,49.7 201.2,46.8" fill="#000"/><polygon points="200,66.6 208.7,69.5 219.1,69.8 224.9,66 233.5,62.5 233.5,59.6 211.6,57.9 218.5,61.9 219.1,66.6 209.2,67.1" fill="#FF00FF"/><polygon points="185,65.4 197.1,64.8 200,66.6 200,70 192.5,70 185.5,67.7" fill="#FF00FF"/><polygon points="176.3,104.7 200,100 248,100 248,118 200,118 200,124.8 176.3,110" fill="url(#RX)"/><polygon points="240.8,108 239.9,110.8 237.4,113.1 233.8,114.3 229.8,114.3 226.2,113.1 223.7,110.8 222.8,108 223.7,105.2 226.2,102.9 229.8,101.7 233.8,101.7 237.4,102.9 239.9,105.2" fill="#000"/><polygon points="213.9,0 300,0 278,17 284,28 291,62 252,63 250.9,50.9 246.2,38.2 234.7,23.1 223.1,6.9" fill="#000"/><polygon points="195,0 213.9,0 223.1,6.9 234.7,23.1 246.2,38.2 250.9,50.9 252,63 254,100 245,100 242.8,63 241.6,52 235.8,39.3 226.6,26.6 217.3,12.7 206.9,5.8 200,8.1" fill="#FF00FF"/><polyline points="226.5,0 246.2,19.7 270,5 281,-1" fill="none" stroke="#FF00FF" stroke-width="2.3"/><polyline points="234,-1 246.8,12.7 265,2 268,-1" fill="none" stroke="#FF00FF" stroke-width="2.3"/><polyline points="240,-1 247,7 258,-1" fill="none" stroke="#FF00FF" stroke-width="2"/><polygon points="253.2,21.4 270.5,10.1 276.1,15.6 283.5,50.8 268.4,56.9 258.4,48" fill="#FF00FF"/><polygon points="254.7,22.6 270.3,12.4 275.3,17.4 282,49.1 268.4,54.6 259.4,46.5" fill="#000"/><polygon points="258.9,26 269.6,19 273.1,22.4 277.7,44.2 268.3,48 262.1,42.5" fill="#FF00FF"/><polygon points="261.4,28.1 269.2,23 271.8,25.4 275.1,41.3 268.3,44 263.8,40" fill="#000"/><polygon points="263.7,29.9 268.9,26.5 270.6,28.1 272.8,38.7 268.3,40.5 265.3,37.9" fill="#FF00FF"/><polygon points="265.5,31.3 268.6,29.3 269.6,30.3 271,36.6 268.2,37.7 266.4,36.1" fill="#000"/><polygon points="267.1,32.7 268.4,31.9 268.8,32.2 269.3,34.7 268.2,35.1 267.5,34.5" fill="#FF00FF"/><polyline points="229,1 246.5,16 268,3" fill="none" stroke="#000" stroke-width="1.6"/><polyline points="250,28 262,13 272,14" fill="none" stroke="#000" stroke-width="1.3"/><polyline points="273.5,9 286,54 287,60 266,62.5" fill="none" stroke="#000" stroke-width="2.4"/><polygon points="278.3,16.5 299.4,4.6 301.3,1.8 304,1.8 304,9.2 280.2,21.1" fill="#000"/><polygon points="283.9,27.5 305,17.4 305.9,22 285.7,32.1" fill="#000"/><polygon points="287.5,35.8 307.7,27.5 308.1,31.2 288.4,39.4" fill="#000"/><polygon points="290.3,43.1 308.6,35.8 309.2,39.4 291.2,46.8" fill="#000"/><polygon points="292.1,50.5 309.5,45 309.9,48.1 293,54.1" fill="#000"/><polygon points="293.9,56.9 310.5,52.3 310.5,55 294.9,59.6" fill="#000"/><polygon points="312.3,7.3 320,5.5 320,60.6 314.1,60.6" fill="#000"/><polygon points="300,0 320,0 320,3 306,1.5" fill="#000"/><polygon points="291.2,68 320,64 320,100 291,100" fill="url(#RY)"/><polygon points="293,100 320,100 320,112 296,112" fill="url(#RX)"/><polygon points="261.3,57.3 280.9,55 290.2,55 290.2,59.6 285.5,63.1 262.4,64.2" fill="#000"/><polyline points="255.5,73 262.4,68 276.3,66 279.8,67" fill="none" stroke="#000" stroke-width="1.3"/><polygon points="260.1,77 268.2,70.6 280.9,68.3 286.7,71.2 285.5,74.7 274,78.1 264.7,79.9" fill="#000"/><polygon points="275.1,82.7 284.4,79.9 285,81.6 276.3,84.5" fill="#000"/><polygon points="259,89.7 269.4,89.1 280.9,93.2 289,97.8 287.9,103.6 280.9,105.9 269.4,104.7 261.3,101.2 258.4,95.5" fill="#000"/><polyline points="254.3,102.4 264.7,107 280.9,109.3" fill="none" stroke="#000" stroke-width="1.4"/><polygon points="260.3,114.5 259.2,117.1 256.6,118.2 254,117.1 252.9,114.5 254,111.9 256.6,110.8 259.2,111.9" fill="#000"/><polyline points="255.5,85 256,101" fill="none" stroke="#000" stroke-width="1.2"/><polygon points="0,125 23,125 27,137 11,173 0,173" fill="url(#RY)"/><polygon points="1.2,158.6 8.7,158.6 8.7,182.7 1.2,182.7" fill="#000"/><polygon points="27.2,137.2 31.8,136 23.7,173 11,173" fill="#000"/><polygon points="21.8,150 37.1,150 32.8,160.9 21.8,200 2.2,200 2.2,193.7 13.1,171.8" fill="#000"/><polygon points="34.7,134.9 44.5,134.9 43.7,150 56.8,150 56.8,200 31.7,200 36,177.3" fill="#000"/><polygon points="50.9,133.7 56.6,133.7 56.6,173 53.8,173 51.4,156.2" fill="#000"/><polyline points="29,140 17,172" fill="none" stroke="#000" stroke-width="2.2"/><polyline points="40,138 37,176 34,198" fill="none" stroke="#000" stroke-width="2.6"/><polyline points="53.8,136 54.6,170" fill="none" stroke="#000" stroke-width="1.6"/><polyline points="46.5,136 45.5,162" fill="none" stroke="#FF00FF" stroke-width="1.3"/><polyline points="42,152 38,180" fill="none" stroke="#FF00FF" stroke-width="1.2" stroke-dasharray="2 2"/><polyline points="20,160 12,185" fill="none" stroke="#FF00FF" stroke-width="1.2" stroke-dasharray="2 2"/><polygon points="56.8,133 59.5,133 59.5,200 56.8,200" fill="#FF00FF"/><polygon points="59.5,133 70,133 100,156.2 108,160 108,200 59.5,200" fill="url(#RY)"/><polygon points="59.5,169.7 76.4,168.6 83,182.8 87.3,198 59.5,198" fill="#000"/><polygon points="69.9,160.9 83,153.3 100,150 100,152.2 83,157.6 71,166.4" fill="#FF00FF"/><polyline points="73,172 80,172" fill="none" stroke="#FF00FF" stroke-width="1.5"/><polygon points="0,192 18,191 20,200 0,200" fill="#000"/><polygon points="100,124.8 320,124.8 320,200 100,200" fill="#FF00FF"/><polygon points="100,110 176.3,110 200,116.9 200,124.8 124.9,124.8 128.3,133.1 124.3,138.9 109.2,149.3 106.9,158.6 100,164.3" fill="#000"/><polygon points="150,100 200,100 200,124.8 157,124.8" fill="#000"/><polygon points="178,102 200,100 200,124 178,124" fill="url(#RX)"/><polygon points="161.3,137.5 154.3,140.5 147.3,137.5 154.3,134.5" fill="url(#RY)"/><polygon points="184,133.7 180.5,135.7 177,133.7 180.5,131.7" fill="#000"/><polygon points="115,141.8 125.4,137.7 139.3,138.3 149.7,141.8 155.5,142.9 164.7,139.5 175.1,138.3 185.5,140.1 192.5,143.5 200,150.5 200,155.1 194.8,148.2 185.5,144.7 176.3,144.1 164.7,144.7 155.5,149.3 149.7,150.5 138.2,144.7 127.7,144.7 111.6,150.5 109.2,156.2" fill="#000"/><polygon points="109.2,156.2 111.6,150.5 127.7,144.7 138.2,144.7 149.7,150.5 149.7,153 130,150 113,158" fill="url(#RX)"/><polygon points="100,164.3 106.9,158.6 108.1,200 100,200" fill="#000"/><polygon points="100,165 103.3,165 103.3,200 100,200" fill="#FF00FF"/><polygon points="129.5,172.4 137.1,175.7 169.9,176.2 176.4,175.1 176.4,178.4 172.1,180.6 143.7,180.6 134.9,178.4" fill="#000"/><polygon points="108.7,171.3 121.8,177.3 143.7,182.8 176.4,182.8 190.6,178.2 200,172.9 200,180.8 187.3,187.3 167.7,193.7 139.3,193.7 127.3,190.6 117.5,185.5 109.3,182.8" fill="#000"/><polygon points="109.3,183.3 117.5,185.5 132.8,195.9 132.8,198.6 109.3,198.6" fill="#000"/><polygon points="200,150.5 203,154 206,162 207.5,170 204,174 200,180.8 200,172.9 203.5,168 203,160 200,155.1" fill="#000"/><polygon points="200,110 215,110 215,126 200,126" fill="url(#RX)"/><polygon points="245,114 243.9,115.4 240.7,116.5 236.1,117.1 230.9,117.1 226.3,116.5 223.1,115.4 222,114 223.1,112.6 226.3,111.5 230.9,110.9 236.1,110.9 240.7,111.5 243.9,112.6" fill="url(#RY)"/><polygon points="260.5,113 259.5,115.5 257,116.5 254.5,115.5 253.5,113 254.5,110.5 257,109.5 259.5,110.5" fill="#000"/><polygon points="255.5,121.6 261.3,117.5 274,116.9 285.5,121 286.7,127.3 279.8,130.2 264.7,129.1 256.6,126.2" fill="#000"/><polyline points="249.7,127.3 257.8,132 269.4,134.9 271.7,133.7" fill="none" stroke="#000" stroke-width="1.8"/><polygon points="200,134.3 211.6,133.7 222.5,130.2 222.5,131.4 212.7,136 200,137.2" fill="#000"/><polygon points="200,141.8 205.8,143.5 213.9,139.5 206.9,144.7 204.6,149.9 202.3,145.8" fill="#000"/><polyline points="225.4,153.9 238.7,143.5" fill="none" stroke="#000" stroke-width="2.2"/><polyline points="233.5,155.1 246.2,145.3" fill="none" stroke="#000" stroke-width="2.2"/><polyline points="235.8,159.7 248.6,150.5" fill="none" stroke="#000" stroke-width="2.2"/><polyline points="239.3,163.2 250.9,155.7" fill="none" stroke="#000" stroke-width="2.2"/><polyline points="245.1,164.3 254.3,156.2" fill="none" stroke="#000" stroke-width="2.2"/><polyline points="209.8,182.8 213.1,171.6 217.7,163.8 226.2,160.2 230.8,163.1" fill="none" stroke="#000" stroke-width="1.6"/><polygon points="234.8,173.6 234.1,176.2 232.3,178.3 229.7,179.4 226.7,179.4 224.1,178.3 222.3,176.2 221.6,173.6 222.3,171 224.1,168.9 226.7,167.8 229.7,167.8 232.3,168.9 234.1,171" fill="#000"/><polygon points="232.6,173.6 232.2,175.2 230.9,176.6 229.2,177.3 227.2,177.3 225.5,176.6 224.2,175.2 223.8,173.6 224.2,172 225.5,170.6 227.2,169.9 229.2,169.9 230.9,170.6 232.2,172" fill="#FF00FF"/><polygon points="230.6,174 229.8,175.1 228.2,175.1 227.4,174 228.2,172.9 229.8,172.9" fill="#000"/><polyline points="209.2,184.7 226.2,187.4" fill="none" stroke="#000" stroke-width="1.9"/><polyline points="211.1,189.3 230.8,190.9" fill="none" stroke="#000" stroke-width="1.7"/><polyline points="211.8,193.9 226.2,195.2" fill="none" stroke="#000" stroke-width="1.7"/><polygon points="216,166 224,163 225,170 220,180 214,182" fill="#000"/><polygon points="231.5,167 236.7,167 236.7,176 233,178" fill="#000"/><polygon points="277,163 320,150 320,200 277.3,200" fill="url(#RX)"/><polygon points="259,137.2 260.7,137.2 263,144.7 264.5,150 269.5,150 271.4,163.1 273.4,176.2 277.3,200 257.7,200 255,176.2 256.6,159.7 259,158.6" fill="#000"/><polyline points="267,152 268,182" fill="none" stroke="#FF00FF" stroke-width="1.2"/><polygon points="265.3,138.9 267.1,138.9 269.4,156.2 267.5,156.2" fill="#000"/><polygon points="274,143.5 277.5,145.8 283.9,150 294.4,163.1 299.6,176.2 304.8,193.3 297,193.3 291.7,176.2 283.9,160.5" fill="#000"/><polyline points="281,152 297,185" fill="none" stroke="#FF00FF" stroke-width="1.1"/><polygon points="239.3,200 240.6,180.1 244.6,178.2 245.2,200" fill="#000"/><polygon points="246.5,200 247.2,184.1 249.1,183.4 249.5,200" fill="#000"/><polygon points="240.5,173 250.9,166.6 254.3,173" fill="#000"/><polygon points="304.8,153.9 311.4,151.3 312.1,164.4 304.8,163.1" fill="#000"/><polygon points="314,150 320,150 320,164.4 315.3,164.4" fill="#000"/><polygon points="296,118 320,118 320,150 300,150" fill="url(#RX)"/><polygon points="312,125 320,123 320,132 314,130.5" fill="#000"/><polygon points="307.5,169.7 320,169 320,188 308.8,187.4 306.8,178.8" fill="#000"/><polyline points="311.4,173.5 320,173.3" fill="none" stroke="#FF00FF" stroke-width="1.1"/><polyline points="311.4,178.4 320,178.2" fill="none" stroke="#FF00FF" stroke-width="1.1"/><polyline points="311.4,183 320,182.8" fill="none" stroke="#FF00FF" stroke-width="1.1"/></svg></div><!--/img2-->

<div class="panel" style="left:388px;top:150px;width:128px;height:17px;"><span class="t">Get pixel to eliminate col</span></div>
<div class="panel" style="left:388px;top:170px;width:62px;height:16px;"><span class="t">X-poss</span></div>
<div class="panel" style="left:452px;top:170px;width:62px;height:16px;"><span class="t">Y-poss</span></div>
<div class="panel" style="left:388px;top:186px;width:62px;height:17px;"><span class="t">161</span></div>
<div class="panel" style="left:452px;top:186px;width:62px;height:17px;"><span class="t">156</span></div>
<div class="panel" style="left:388px;top:206px;width:128px;height:17px;"><span class="t">HEX</span></div>
<div class="panel" style="left:388px;top:226px;width:62px;height:17px;"><span class="t">00A1</span></div>
<div class="panel" style="left:452px;top:226px;width:62px;height:17px;"><span class="t">009C</span></div>
<div class="abs" style="left:388px;top:250px;width:129px;height:49px;background:#1C211F;"></div>

<div class="panel" style="left:380px;top:318px;width:148px;height:17px;"><span class="t">Adres from $0x2000 (8192)</span></div>
<div class="panel" style="left:388px;top:338px;width:62px;height:16px;"><span class="t">Dec</span></div>
<div class="panel" style="left:452px;top:338px;width:62px;height:16px;"><span class="t">HEX</span></div>
<div class="panel" style="left:388px;top:354px;width:62px;height:17px;"><span class="t">14436</span></div>
<div class="panel" style="left:452px;top:354px;width:62px;height:17px;"><span class="t">3864</span></div>
<div class="panel" style="left:380px;top:382px;width:140px;height:17px;"><span class="t">Bit poss</span></div>
<div class="panel" style="left:388px;top:402px;width:62px;height:16px;"><span class="t">Dec</span></div>
<div class="panel" style="left:452px;top:402px;width:62px;height:16px;"><span class="t">HEX</span></div>
<div class="panel" style="left:388px;top:418px;width:62px;height:17px;"><span class="t">7</span></div>
<div class="panel" style="left:452px;top:418px;width:62px;height:17px;"><span class="t">07</span></div>
<div class="panel" style="left:380px;top:438px;width:140px;height:17px;"><span class="t">Value of bit</span></div>
<div class="panel" style="left:388px;top:457px;width:62px;height:16px;"><span class="t">Dec</span></div>
<div class="panel" style="left:452px;top:457px;width:62px;height:16px;"><span class="t">HEX</span></div>
<div class="panel" style="left:388px;top:474px;width:62px;height:17px;"><span class="t">64</span></div>
<div class="panel" style="left:452px;top:474px;width:62px;height:17px;"><span class="t">40</span></div>

<div class="panel" style="left:620px;top:130px;width:201px;height:17px;"><span class="t">DECIMAL OFFSET IN READ FILE</span></div>
<div class="abs" id="edit" style="left:620px;top:149px;width:121px;height:20px;box-sizing:border-box;background:#fff;border:1px solid;border-color:#ACA899 #fff #fff #ACA899;"><div style="position:absolute;left:0;top:0;right:0;bottom:0;border:1px solid;border-color:#716F64 #F1EFE2 #F1EFE2 #716F64;"></div><div class="txt" style="left:3px;top:2px;"><span class="t">0</span></div></div>
<div class="abs" id="chk" style="left:756px;top:156px;width:13px;height:13px;box-sizing:border-box;border:1px solid #1C5180;background:linear-gradient(135deg,#DCDCD7,#fff);"></div>
<div class="txt" style="left:774px;top:155px;"><span class="t">Save load adress</span></div>

<div class="abs" id="memo" style="left:12px;top:428px;width:345px;height:89px;box-sizing:border-box;border:1px solid;border-color:#ACA899 #fff #fff #ACA899;background:#fff;">
<div style="position:absolute;left:0;top:0;right:0;bottom:0;border:1px solid;border-color:#716F64 #F1EFE2 #F1EFE2 #716F64;"></div>
<pre class="memo-t">        *= $0801
;===============================
; (C) BY WEGI IN 2011.09.07
;===============================
        .BYTE $0B,$08,$90,$06,$9E,$32</pre>
<div id="vsb"><div class="sbtn" style="top:0"><svg width="16" height="16" viewBox="0 0 16 16"><path d="M4.5,9.5 L8,6 L11.5,9.5" stroke="#4D6185" stroke-width="2" fill="none"/></svg></div><div class="sbtn" style="top:17px;height:8px"></div><div class="sbtn" style="top:52px"><svg width="16" height="16" viewBox="0 0 16 16"><path d="M4.5,6.5 L8,10 L11.5,6.5" stroke="#4D6185" stroke-width="2" fill="none"/></svg></div></div>
<div id="hsb"><div class="sbtn dis" style="left:1px;top:1px;height:15px;width:15px"><svg width="15" height="15" viewBox="0 0 16 16"><path d="M9.5,4.5 L6,8 L9.5,11.5" stroke="#C9C7BA" stroke-width="2" fill="none"/></svg></div><div class="sbtn dis" style="left:308px;top:1px;height:15px;width:15px"><svg width="15" height="15" viewBox="0 0 16 16"><path d="M6.5,4.5 L10,8 L6.5,11.5" stroke="#C9C7BA" stroke-width="2" fill="none"/></svg></div></div><div id="sbc"></div>
</div>

<div class="abs" id="exp-ic" style="left:643px;top:427px;width:32px;height:32px;"><svg width="32" height="32" viewBox="0 0 32 32" style="display:block"><polygon points="7,0 25,0 32,7 32,25 25,32 7,32 0,25 0,7" fill="#3A3A3A"/><polygon points="7.4,1 24.6,1 31,7.4 31,24.6 24.6,31 7.4,31 1,24.6 1,7.4" fill="url(#gFrame)"/><polygon points="8.2,2.6 23.8,2.6 29.4,8.2 29.4,23.8 23.8,29.4 8.2,29.4 2.6,23.8 2.6,8.2" fill="url(#gFrame2)"/><circle cx="7.3" cy="3.8" r="0.8" fill="#BDBDBD"/><circle cx="24.4" cy="3.8" r="0.8" fill="#BDBDBD"/><circle cx="3.4" cy="7.8" r="0.8" fill="#BDBDBD"/><circle cx="28.3" cy="7.8" r="0.8" fill="#BDBDBD"/><circle cx="3.4" cy="23.9" r="0.8" fill="#BDBDBD"/><circle cx="28.3" cy="23.9" r="0.8" fill="#BDBDBD"/><circle cx="7.3" cy="27.9" r="0.8" fill="#BDBDBD"/><circle cx="24.4" cy="27.9" r="0.8" fill="#BDBDBD"/><circle cx="4.6" cy="16.5" r="0.8" fill="#BDBDBD"/><circle cx="26.9" cy="16.5" r="0.8" fill="#BDBDBD"/><circle cx="16" cy="16" r="12.6" fill="#262626"/><circle cx="16" cy="16" r="10.4" fill="none" stroke="url(#gRing)" stroke-width="2.6"/><circle cx="16" cy="16" r="8.2" fill="#2E2E2E"/><circle cx="16" cy="16" r="7.8" fill="url(#gBlue)"/><path d="M6.5,10.5 Q7,7 11,6.3 Q15,6 16.5,9 L17.5,13 L25.5,20.5 Q26.5,22.5 24.8,23.8 Q23,25 21.5,23.2 L14,15.5 L10,14.8 Q7.5,13.8 7,12 L11.5,12 L12,10 Z" fill="#E4E4E4" stroke="#222" stroke-width="0.9" stroke-linejoin="round"/><path d="M16.5,12.5 L24.5,20.5" stroke="#9A9A9A" stroke-width="1.6" fill="none"/><polygon points="19.6,5.2 20,12.4 26.6,13.2 27.4,11.4 24.2,6.4" fill="url(#gBladeA)"/><polygon points="4.2,20.6 10.8,20.2 11.4,27 7.8,25.6 4.8,22.6" fill="url(#gBladeB)"/></svg></div>
<div class="txt" style="left:687px;top:437px;"><span class="t">EXPORT TO TASM SOURCE</span></div>

<div class="abs sp" style="left:4px;top:524px;width:250px;height:17px;"></div>
<div class="abs sp" style="left:256px;top:524px;width:656px;height:17px;"></div>
<svg class="abs" style="left:898px;top:527px" width="14" height="14" viewBox="0 0 14 14"><path d="M1.5,13.5 L13.5,1.5 M5.5,13.5 L13.5,5.5 M9.5,13.5 L13.5,9.5" stroke="#fff" stroke-width="1.2"/><path d="M2.5,13.5 L13.5,2.5 M3.5,13.5 L13.5,3.5 M6.5,13.5 L13.5,6.5 M7.5,13.5 L13.5,7.5 M10.5,13.5 L13.5,10.5 M11.5,13.5 L13.5,11.5" stroke="#A9A795" stroke-width="1"/></svg>


</body>
</html>
